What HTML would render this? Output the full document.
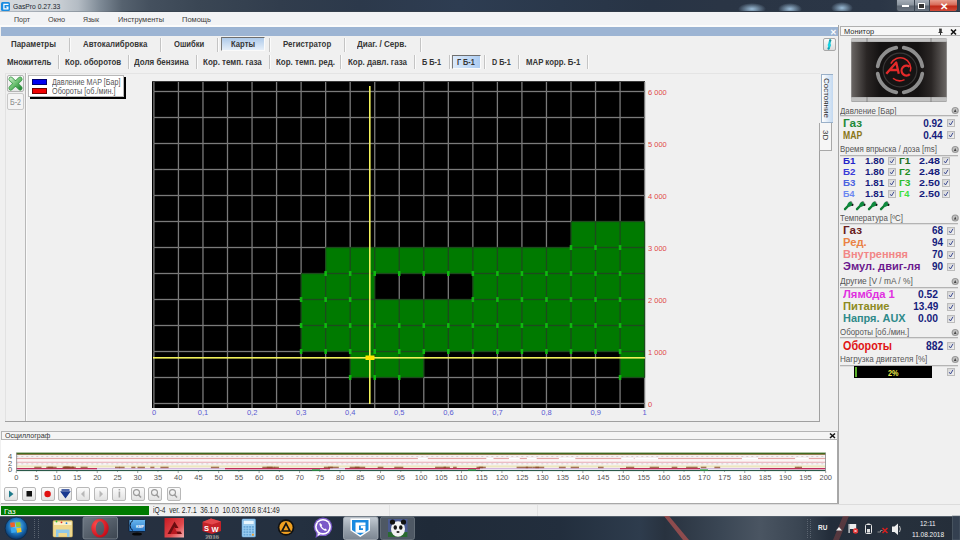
<!DOCTYPE html><html><head><meta charset="utf-8"><style>
html,body{margin:0;padding:0}
body{width:960px;height:540px;overflow:hidden;position:relative;background:#f0f0f0;font-family:"Liberation Sans",sans-serif}
.t{position:absolute;white-space:pre;font-family:"Liberation Sans",sans-serif}
svg{position:absolute;left:0;top:0}
</style></head><body>
<div style="position:absolute;left:0px;top:0px;width:960px;height:12px;background:linear-gradient(90deg,#d6dadf 0px,#cdd2d7 55px,#b4bcc4 78px,#7e8a96 100px,#56626f 122px,#44505e 150px,#3a4654 200px,#313d4d 280px,#2c394b 360px,#2e3d52 460px,#2a384b 560px,#283445 650px,#2a3545 720px,#2b3646 880px,#3a4552 960px)"></div>
<svg width="960" height="540"><defs><radialGradient id="blot"><stop offset="0" stop-color="#a8cce8" stop-opacity="0.9"/><stop offset="1" stop-color="#a8cce8" stop-opacity="0"/></radialGradient></defs><g fill="url(#blot)"><ellipse cx="752" cy="9" rx="14" ry="6"/><ellipse cx="790" cy="9" rx="12" ry="6"/><ellipse cx="842" cy="8" rx="11" ry="6"/></g></svg>
<div style="position:absolute;left:0px;top:11px;width:960px;height:1px;background:linear-gradient(90deg,#b8bec6,#8a949e 90px,#3a4552 130px,#2a3442 960px)"></div>
<svg width="960" height="540"><rect x="1" y="2" width="9" height="9" rx="1.5" fill="#1a8ce0"/><path d="M8.5 3.8 h-5.2 v5.6 h5.2 v-3 h-2.4 v1.2 h1 v0.6 h-2.6 v-3.2 h4Z" fill="#fff"/></svg>
<div class=t style="left:12.70px;top:2px;font-size:7.5px;line-height:9px;color:#20262e;font-weight:normal;transform:scaleX(0.898);transform-origin:0 0;">GasPro 0.27.33</div>
<div style="position:absolute;left:896px;top:0px;width:62px;height:12px;background:linear-gradient(#a4acb6,#8a949e 45%,#5c6672 55%,#6a7480);border:1px solid #343e4a;border-top:none;border-radius:0 0 3px 3px;box-sizing:border-box"></div>
<div style="position:absolute;left:914px;top:0px;width:1px;height:12px;background:#3a4450"></div>
<div style="position:absolute;left:929px;top:0px;width:1px;height:12px;background:#3a4450"></div>
<div style="position:absolute;left:930px;top:0px;width:27px;height:11px;background:linear-gradient(#e8a090,#d86a58 45%,#c02a18 55%,#d04a38);border-radius:0 0 3px 0"></div>
<div style="position:absolute;left:902px;top:5px;width:7px;height:2px;background:#fff"></div>
<div style="position:absolute;left:918px;top:3px;width:7px;height:6px;background:#333;border:1.5px solid #fff;box-sizing:border-box"></div>
<div class=t style="left:939.50px;top:1px;font-size:9.5px;line-height:11px;color:#fff;font-weight:bold;">✕</div>
<div style="position:absolute;left:0px;top:12px;width:960px;height:14px;background:#f2f3f5"></div>
<div class=t style="left:13.75px;top:15px;font-size:8px;line-height:9px;color:#3a3a3a;font-weight:normal;transform:scaleX(0.880);transform-origin:0 0;">Порт</div>
<div class=t style="left:48.00px;top:15px;font-size:8px;line-height:9px;color:#3a3a3a;font-weight:normal;transform:scaleX(0.914);transform-origin:0 0;">Окно</div>
<div class=t style="left:83.00px;top:15px;font-size:8px;line-height:9px;color:#3a3a3a;font-weight:normal;transform:scaleX(0.860);transform-origin:0 0;">Язык</div>
<div class=t style="left:117.50px;top:15px;font-size:8px;line-height:9px;color:#3a3a3a;font-weight:normal;transform:scaleX(0.923);transform-origin:0 0;">Инструменты</div>
<div class=t style="left:181.75px;top:15px;font-size:8px;line-height:9px;color:#3a3a3a;font-weight:normal;transform:scaleX(0.936);transform-origin:0 0;">Помощь</div>
<div style="position:absolute;left:0px;top:25px;width:839px;height:2px;background:#fbfbfb"></div>
<div style="position:absolute;left:1px;top:27px;width:837px;height:9px;background:#9cb4d3"></div>
<div class=t style="left:829.50px;top:28px;font-size:7.5px;line-height:9px;color:#ffffff;font-weight:bold;">✕</div>
<div style="position:absolute;left:0px;top:36px;width:838px;height:36px;background:#f0f0f0"></div>
<div style="position:absolute;left:221px;top:37px;width:44px;height:14px;background:linear-gradient(#aecaea,#e6eff9);border-top:1.5px solid #6e6e6e;border-left:1.2px solid #7a7a7a;border-right:1px solid #fafafa;border-bottom:1px solid #fafafa;box-sizing:border-box"></div>
<div style="position:absolute;left:69px;top:38px;width:1px;height:14px;background:#c4c4c4"></div>
<div style="position:absolute;left:70px;top:38px;width:1px;height:14px;background:#fbfbfb"></div>
<div style="position:absolute;left:160px;top:38px;width:1px;height:14px;background:#c4c4c4"></div>
<div style="position:absolute;left:161px;top:38px;width:1px;height:14px;background:#fbfbfb"></div>
<div style="position:absolute;left:217px;top:38px;width:1px;height:14px;background:#c4c4c4"></div>
<div style="position:absolute;left:218px;top:38px;width:1px;height:14px;background:#fbfbfb"></div>
<div style="position:absolute;left:269px;top:38px;width:1px;height:14px;background:#c4c4c4"></div>
<div style="position:absolute;left:270px;top:38px;width:1px;height:14px;background:#fbfbfb"></div>
<div style="position:absolute;left:344px;top:38px;width:1px;height:14px;background:#c4c4c4"></div>
<div style="position:absolute;left:345px;top:38px;width:1px;height:14px;background:#fbfbfb"></div>
<div style="position:absolute;left:420px;top:38px;width:1px;height:14px;background:#c4c4c4"></div>
<div style="position:absolute;left:421px;top:38px;width:1px;height:14px;background:#fbfbfb"></div>
<div class=t style="left:10.70px;top:39px;font-size:8.5px;line-height:10px;color:#363636;font-weight:bold;transform:scaleX(0.931);transform-origin:0 0;">Параметры</div>
<div class=t style="left:82.50px;top:39px;font-size:8.5px;line-height:10px;color:#363636;font-weight:bold;transform:scaleX(0.919);transform-origin:0 0;">Автокалибровка</div>
<div class=t style="left:174.25px;top:39px;font-size:8.5px;line-height:10px;color:#363636;font-weight:bold;transform:scaleX(0.898);transform-origin:0 0;">Ошибки</div>
<div class=t style="left:231.25px;top:39px;font-size:8.5px;line-height:10px;color:#363636;font-weight:bold;transform:scaleX(0.904);transform-origin:0 0;">Карты</div>
<div class=t style="left:282.50px;top:39px;font-size:8.5px;line-height:10px;color:#363636;font-weight:bold;transform:scaleX(0.923);transform-origin:0 0;">Регистратор</div>
<div class=t style="left:357.00px;top:39px;font-size:8.5px;line-height:10px;color:#363636;font-weight:bold;transform:scaleX(0.958);transform-origin:0 0;">Диаг. / Серв.</div>
<div style="position:absolute;left:452px;top:55px;width:29px;height:14px;background:linear-gradient(90deg,#dceafa,#acccf2);border-top:1.5px solid #6e6e6e;border-left:1.5px solid #7a7a7a;border-right:1px solid #fafafa;border-bottom:1px solid #fafafa;box-sizing:border-box"></div>
<div style="position:absolute;left:58px;top:55px;width:1px;height:14px;background:#c4c4c4"></div>
<div style="position:absolute;left:59px;top:55px;width:1px;height:14px;background:#fbfbfb"></div>
<div style="position:absolute;left:128px;top:55px;width:1px;height:14px;background:#c4c4c4"></div>
<div style="position:absolute;left:129px;top:55px;width:1px;height:14px;background:#fbfbfb"></div>
<div style="position:absolute;left:196px;top:55px;width:1px;height:14px;background:#c4c4c4"></div>
<div style="position:absolute;left:197px;top:55px;width:1px;height:14px;background:#fbfbfb"></div>
<div style="position:absolute;left:269px;top:55px;width:1px;height:14px;background:#c4c4c4"></div>
<div style="position:absolute;left:270px;top:55px;width:1px;height:14px;background:#fbfbfb"></div>
<div style="position:absolute;left:340px;top:55px;width:1px;height:14px;background:#c4c4c4"></div>
<div style="position:absolute;left:341px;top:55px;width:1px;height:14px;background:#fbfbfb"></div>
<div style="position:absolute;left:414px;top:55px;width:1px;height:14px;background:#c4c4c4"></div>
<div style="position:absolute;left:415px;top:55px;width:1px;height:14px;background:#fbfbfb"></div>
<div style="position:absolute;left:449px;top:55px;width:1px;height:14px;background:#c4c4c4"></div>
<div style="position:absolute;left:450px;top:55px;width:1px;height:14px;background:#fbfbfb"></div>
<div style="position:absolute;left:484px;top:55px;width:1px;height:14px;background:#c4c4c4"></div>
<div style="position:absolute;left:485px;top:55px;width:1px;height:14px;background:#fbfbfb"></div>
<div style="position:absolute;left:518px;top:55px;width:1px;height:14px;background:#c4c4c4"></div>
<div style="position:absolute;left:519px;top:55px;width:1px;height:14px;background:#fbfbfb"></div>
<div style="position:absolute;left:587px;top:55px;width:1px;height:14px;background:#c4c4c4"></div>
<div style="position:absolute;left:588px;top:55px;width:1px;height:14px;background:#fbfbfb"></div>
<div class=t style="left:7.10px;top:57px;font-size:8.5px;line-height:10px;color:#363636;font-weight:bold;transform:scaleX(0.924);transform-origin:0 0;">Множитель</div>
<div class=t style="left:65.00px;top:57px;font-size:8.5px;line-height:10px;color:#363636;font-weight:bold;transform:scaleX(0.928);transform-origin:0 0;">Кор. оборотов</div>
<div class=t style="left:134.25px;top:57px;font-size:8.5px;line-height:10px;color:#363636;font-weight:bold;transform:scaleX(0.939);transform-origin:0 0;">Доля бензина</div>
<div class=t style="left:202.70px;top:57px;font-size:8.5px;line-height:10px;color:#363636;font-weight:bold;transform:scaleX(0.941);transform-origin:0 0;">Кор. темп. газа</div>
<div class=t style="left:275.75px;top:57px;font-size:8.5px;line-height:10px;color:#363636;font-weight:bold;transform:scaleX(0.939);transform-origin:0 0;">Кор. темп. ред.</div>
<div class=t style="left:348.25px;top:57px;font-size:8.5px;line-height:10px;color:#363636;font-weight:bold;transform:scaleX(0.938);transform-origin:0 0;">Кор. давл. газа</div>
<div class=t style="left:422.00px;top:57px;font-size:8.5px;line-height:10px;color:#363636;font-weight:bold;transform:scaleX(0.859);transform-origin:0 0;">Б Б-1</div>
<div class=t style="left:457.00px;top:57px;font-size:8.5px;line-height:10px;color:#363636;font-weight:bold;transform:scaleX(0.852);transform-origin:0 0;">Г Б-1</div>
<div class=t style="left:491.75px;top:57px;font-size:8.5px;line-height:10px;color:#363636;font-weight:bold;transform:scaleX(0.847);transform-origin:0 0;">D Б-1</div>
<div class=t style="left:525.75px;top:57px;font-size:8.5px;line-height:10px;color:#363636;font-weight:bold;transform:scaleX(0.918);transform-origin:0 0;">MAP корр. Б-1</div>
<div style="position:absolute;left:823px;top:38px;width:13px;height:13px;background:linear-gradient(#fafafa,#dcdcdc);border:1px solid #a8a8a8;border-radius:2px;box-sizing:border-box"></div>
<svg width="960" height="540"><path d="M830.2 40.2 L829.4 43.5 L829.8 45.2 L828.6 48.6" stroke="#18c4d4" stroke-width="2.2" stroke-linecap="round" fill="none"/><circle cx="830.3" cy="40.6" r="1" fill="#2a8a8a"/><circle cx="829" cy="45" r="1.3" fill="#10d8e8"/><circle cx="828.6" cy="48.4" r="1" fill="#1a9aa8"/></svg>
<div style="position:absolute;left:5px;top:73px;width:815px;height:1px;background:#e4e4e4"></div>
<div style="position:absolute;left:5px;top:74px;width:1px;height:347px;background:#e2e2e2"></div>
<div style="position:absolute;left:25px;top:73px;width:1px;height:349px;background:#b8b8b8"></div>
<div style="position:absolute;left:26px;top:73px;width:1px;height:348px;background:#fafafa"></div>
<div style="position:absolute;left:5px;top:421px;width:815px;height:1px;background:#a0a0a0"></div>
<div style="position:absolute;left:819px;top:150px;width:1px;height:272px;background:#a0a0a0"></div>
<div style="position:absolute;left:7px;top:75px;width:17px;height:17px;background:linear-gradient(#fdfdfd,#e6e6e6);border:1px solid #b4b4b4;border-radius:2px;box-sizing:border-box"></div>
<svg width="960" height="540"><defs><linearGradient id="xg" x1="0" y1="0" x2="1" y2="1"><stop offset="0" stop-color="#b8e4b8"/><stop offset="0.5" stop-color="#6cc070"/><stop offset="1" stop-color="#2a8a3a"/></linearGradient></defs><g stroke-linecap="round"><path d="M10.8 79 L20.2 88.2 M20.2 79 L10.8 88.2" stroke="#3a9a48" stroke-width="4.6"/><path d="M10.8 79 L20.2 88.2 M20.2 79 L10.8 88.2" stroke="url(#xg)" stroke-width="3.2"/></g></svg>
<div style="position:absolute;left:7px;top:93px;width:17px;height:17px;background:#f4f4f4;border:1px solid #c8c8c8;border-radius:2px;box-sizing:border-box"></div>
<div class=t style="left:10.20px;top:97px;font-size:8.5px;line-height:10px;color:#8a8a8a;font-weight:normal;transform:scaleX(0.835);transform-origin:0 0;">Б-2</div>
<div style="position:absolute;left:30px;top:77px;width:96px;height:22px;background:#000"></div>
<div style="position:absolute;left:28px;top:75px;width:96px;height:22px;background:#fff;border:1px solid #b8b8b8;box-sizing:border-box"></div>
<div style="position:absolute;left:32px;top:79px;width:15px;height:6px;background:#0000f0;border:0.6px solid #000070;box-sizing:border-box"></div>
<div style="position:absolute;left:32px;top:88px;width:15px;height:6px;background:#f00000;border:0.6px solid #700000;box-sizing:border-box"></div>
<div class=t style="left:51.50px;top:77px;font-size:8.5px;line-height:10px;color:#555555;font-weight:normal;transform:scaleX(0.841);transform-origin:0 0;">Давление MAP [Бар]</div>
<div class=t style="left:51.90px;top:86px;font-size:8.5px;line-height:10px;color:#555555;font-weight:normal;transform:scaleX(0.852);transform-origin:0 0;">Обороты [об./мин.]</div>
<svg width="960" height="540"><rect x="152" y="81" width="493" height="327" fill="#000"/><rect x="152" y="81" width="493" height="1" fill="#3a3a3a"/><rect x="350.18" y="351.50" width="24.84" height="26.30" fill="#007a00"/><rect x="374.72" y="351.50" width="24.83" height="26.30" fill="#007a00"/><rect x="399.25" y="351.50" width="24.83" height="26.30" fill="#007a00"/><rect x="620.07" y="351.50" width="24.83" height="26.30" fill="#007a00"/><rect x="301.11" y="325.50" width="24.83" height="26.30" fill="#007a00"/><rect x="325.64" y="325.50" width="24.84" height="26.30" fill="#007a00"/><rect x="350.18" y="325.50" width="24.84" height="26.30" fill="#007a00"/><rect x="374.72" y="325.50" width="24.83" height="26.30" fill="#007a00"/><rect x="399.25" y="325.50" width="24.83" height="26.30" fill="#007a00"/><rect x="423.78" y="325.50" width="24.84" height="26.30" fill="#007a00"/><rect x="448.32" y="325.50" width="24.83" height="26.30" fill="#007a00"/><rect x="472.86" y="325.50" width="24.83" height="26.30" fill="#007a00"/><rect x="497.39" y="325.50" width="24.83" height="26.30" fill="#007a00"/><rect x="521.92" y="325.50" width="24.84" height="26.30" fill="#007a00"/><rect x="546.46" y="325.50" width="24.83" height="26.30" fill="#007a00"/><rect x="571.00" y="325.50" width="24.83" height="26.30" fill="#007a00"/><rect x="595.53" y="325.50" width="24.84" height="26.30" fill="#007a00"/><rect x="620.07" y="325.50" width="24.83" height="26.30" fill="#007a00"/><rect x="301.11" y="299.50" width="24.83" height="26.30" fill="#007a00"/><rect x="325.64" y="299.50" width="24.84" height="26.30" fill="#007a00"/><rect x="350.18" y="299.50" width="24.84" height="26.30" fill="#007a00"/><rect x="374.72" y="299.50" width="24.83" height="26.30" fill="#007a00"/><rect x="399.25" y="299.50" width="24.83" height="26.30" fill="#007a00"/><rect x="423.78" y="299.50" width="24.84" height="26.30" fill="#007a00"/><rect x="448.32" y="299.50" width="24.83" height="26.30" fill="#007a00"/><rect x="472.86" y="299.50" width="24.83" height="26.30" fill="#007a00"/><rect x="497.39" y="299.50" width="24.83" height="26.30" fill="#007a00"/><rect x="521.92" y="299.50" width="24.84" height="26.30" fill="#007a00"/><rect x="546.46" y="299.50" width="24.83" height="26.30" fill="#007a00"/><rect x="571.00" y="299.50" width="24.83" height="26.30" fill="#007a00"/><rect x="595.53" y="299.50" width="24.84" height="26.30" fill="#007a00"/><rect x="620.07" y="299.50" width="24.83" height="26.30" fill="#007a00"/><rect x="301.11" y="273.50" width="24.83" height="26.30" fill="#007a00"/><rect x="325.64" y="273.50" width="24.84" height="26.30" fill="#007a00"/><rect x="350.18" y="273.50" width="24.84" height="26.30" fill="#007a00"/><rect x="472.86" y="273.50" width="24.83" height="26.30" fill="#007a00"/><rect x="497.39" y="273.50" width="24.83" height="26.30" fill="#007a00"/><rect x="521.92" y="273.50" width="24.84" height="26.30" fill="#007a00"/><rect x="546.46" y="273.50" width="24.83" height="26.30" fill="#007a00"/><rect x="571.00" y="273.50" width="24.83" height="26.30" fill="#007a00"/><rect x="595.53" y="273.50" width="24.84" height="26.30" fill="#007a00"/><rect x="620.07" y="273.50" width="24.83" height="26.30" fill="#007a00"/><rect x="325.64" y="247.50" width="24.84" height="26.30" fill="#007a00"/><rect x="350.18" y="247.50" width="24.84" height="26.30" fill="#007a00"/><rect x="374.72" y="247.50" width="24.83" height="26.30" fill="#007a00"/><rect x="399.25" y="247.50" width="24.83" height="26.30" fill="#007a00"/><rect x="423.78" y="247.50" width="24.84" height="26.30" fill="#007a00"/><rect x="448.32" y="247.50" width="24.83" height="26.30" fill="#007a00"/><rect x="472.86" y="247.50" width="24.83" height="26.30" fill="#007a00"/><rect x="497.39" y="247.50" width="24.83" height="26.30" fill="#007a00"/><rect x="521.92" y="247.50" width="24.84" height="26.30" fill="#007a00"/><rect x="546.46" y="247.50" width="24.83" height="26.30" fill="#007a00"/><rect x="571.00" y="247.50" width="24.83" height="26.30" fill="#007a00"/><rect x="595.53" y="247.50" width="24.84" height="26.30" fill="#007a00"/><rect x="620.07" y="247.50" width="24.83" height="26.30" fill="#007a00"/><rect x="571.00" y="221.50" width="24.83" height="26.30" fill="#007a00"/><rect x="595.53" y="221.50" width="24.84" height="26.30" fill="#007a00"/><rect x="620.07" y="221.50" width="24.83" height="26.30" fill="#007a00"/><line x1="153.9" y1="377.50" x2="153.9" y2="403.50" stroke="#7a7a7a" stroke-width="1.3"/><line x1="153.9" y1="351.50" x2="153.9" y2="377.50" stroke="#7a7a7a" stroke-width="1.3"/><line x1="153.9" y1="325.50" x2="153.9" y2="351.50" stroke="#7a7a7a" stroke-width="1.3"/><line x1="153.9" y1="299.50" x2="153.9" y2="325.50" stroke="#7a7a7a" stroke-width="1.3"/><line x1="153.9" y1="273.50" x2="153.9" y2="299.50" stroke="#7a7a7a" stroke-width="1.3"/><line x1="153.9" y1="247.50" x2="153.9" y2="273.50" stroke="#7a7a7a" stroke-width="1.3"/><line x1="153.9" y1="221.50" x2="153.9" y2="247.50" stroke="#7a7a7a" stroke-width="1.3"/><line x1="153.9" y1="195.50" x2="153.9" y2="221.50" stroke="#7a7a7a" stroke-width="1.3"/><line x1="153.9" y1="169.50" x2="153.9" y2="195.50" stroke="#7a7a7a" stroke-width="1.3"/><line x1="153.9" y1="143.50" x2="153.9" y2="169.50" stroke="#7a7a7a" stroke-width="1.3"/><line x1="153.9" y1="117.50" x2="153.9" y2="143.50" stroke="#7a7a7a" stroke-width="1.3"/><line x1="153.9" y1="91.50" x2="153.9" y2="117.50" stroke="#7a7a7a" stroke-width="1.3"/><line x1="153.9" y1="82" x2="153.9" y2="91.50" stroke="#7a7a7a" stroke-width="1.3"/><line x1="153.9" y1="403.50" x2="153.9" y2="408" stroke="#7a7a7a" stroke-width="1.3"/><line x1="178.44" y1="377.50" x2="178.44" y2="403.50" stroke="#7a7a7a" stroke-width="1.3"/><line x1="178.44" y1="351.50" x2="178.44" y2="377.50" stroke="#7a7a7a" stroke-width="1.3"/><line x1="178.44" y1="325.50" x2="178.44" y2="351.50" stroke="#7a7a7a" stroke-width="1.3"/><line x1="178.44" y1="299.50" x2="178.44" y2="325.50" stroke="#7a7a7a" stroke-width="1.3"/><line x1="178.44" y1="273.50" x2="178.44" y2="299.50" stroke="#7a7a7a" stroke-width="1.3"/><line x1="178.44" y1="247.50" x2="178.44" y2="273.50" stroke="#7a7a7a" stroke-width="1.3"/><line x1="178.44" y1="221.50" x2="178.44" y2="247.50" stroke="#7a7a7a" stroke-width="1.3"/><line x1="178.44" y1="195.50" x2="178.44" y2="221.50" stroke="#7a7a7a" stroke-width="1.3"/><line x1="178.44" y1="169.50" x2="178.44" y2="195.50" stroke="#7a7a7a" stroke-width="1.3"/><line x1="178.44" y1="143.50" x2="178.44" y2="169.50" stroke="#7a7a7a" stroke-width="1.3"/><line x1="178.44" y1="117.50" x2="178.44" y2="143.50" stroke="#7a7a7a" stroke-width="1.3"/><line x1="178.44" y1="91.50" x2="178.44" y2="117.50" stroke="#7a7a7a" stroke-width="1.3"/><line x1="178.44" y1="82" x2="178.44" y2="91.50" stroke="#7a7a7a" stroke-width="1.3"/><line x1="178.44" y1="403.50" x2="178.44" y2="408" stroke="#7a7a7a" stroke-width="1.3"/><line x1="202.97" y1="377.50" x2="202.97" y2="403.50" stroke="#7a7a7a" stroke-width="1.3"/><line x1="202.97" y1="351.50" x2="202.97" y2="377.50" stroke="#7a7a7a" stroke-width="1.3"/><line x1="202.97" y1="325.50" x2="202.97" y2="351.50" stroke="#7a7a7a" stroke-width="1.3"/><line x1="202.97" y1="299.50" x2="202.97" y2="325.50" stroke="#7a7a7a" stroke-width="1.3"/><line x1="202.97" y1="273.50" x2="202.97" y2="299.50" stroke="#7a7a7a" stroke-width="1.3"/><line x1="202.97" y1="247.50" x2="202.97" y2="273.50" stroke="#7a7a7a" stroke-width="1.3"/><line x1="202.97" y1="221.50" x2="202.97" y2="247.50" stroke="#7a7a7a" stroke-width="1.3"/><line x1="202.97" y1="195.50" x2="202.97" y2="221.50" stroke="#7a7a7a" stroke-width="1.3"/><line x1="202.97" y1="169.50" x2="202.97" y2="195.50" stroke="#7a7a7a" stroke-width="1.3"/><line x1="202.97" y1="143.50" x2="202.97" y2="169.50" stroke="#7a7a7a" stroke-width="1.3"/><line x1="202.97" y1="117.50" x2="202.97" y2="143.50" stroke="#7a7a7a" stroke-width="1.3"/><line x1="202.97" y1="91.50" x2="202.97" y2="117.50" stroke="#7a7a7a" stroke-width="1.3"/><line x1="202.97" y1="82" x2="202.97" y2="91.50" stroke="#7a7a7a" stroke-width="1.3"/><line x1="202.97" y1="403.50" x2="202.97" y2="408" stroke="#7a7a7a" stroke-width="1.3"/><line x1="227.5" y1="377.50" x2="227.5" y2="403.50" stroke="#7a7a7a" stroke-width="1.3"/><line x1="227.5" y1="351.50" x2="227.5" y2="377.50" stroke="#7a7a7a" stroke-width="1.3"/><line x1="227.5" y1="325.50" x2="227.5" y2="351.50" stroke="#7a7a7a" stroke-width="1.3"/><line x1="227.5" y1="299.50" x2="227.5" y2="325.50" stroke="#7a7a7a" stroke-width="1.3"/><line x1="227.5" y1="273.50" x2="227.5" y2="299.50" stroke="#7a7a7a" stroke-width="1.3"/><line x1="227.5" y1="247.50" x2="227.5" y2="273.50" stroke="#7a7a7a" stroke-width="1.3"/><line x1="227.5" y1="221.50" x2="227.5" y2="247.50" stroke="#7a7a7a" stroke-width="1.3"/><line x1="227.5" y1="195.50" x2="227.5" y2="221.50" stroke="#7a7a7a" stroke-width="1.3"/><line x1="227.5" y1="169.50" x2="227.5" y2="195.50" stroke="#7a7a7a" stroke-width="1.3"/><line x1="227.5" y1="143.50" x2="227.5" y2="169.50" stroke="#7a7a7a" stroke-width="1.3"/><line x1="227.5" y1="117.50" x2="227.5" y2="143.50" stroke="#7a7a7a" stroke-width="1.3"/><line x1="227.5" y1="91.50" x2="227.5" y2="117.50" stroke="#7a7a7a" stroke-width="1.3"/><line x1="227.5" y1="82" x2="227.5" y2="91.50" stroke="#7a7a7a" stroke-width="1.3"/><line x1="227.5" y1="403.50" x2="227.5" y2="408" stroke="#7a7a7a" stroke-width="1.3"/><line x1="252.04" y1="377.50" x2="252.04" y2="403.50" stroke="#7a7a7a" stroke-width="1.3"/><line x1="252.04" y1="351.50" x2="252.04" y2="377.50" stroke="#7a7a7a" stroke-width="1.3"/><line x1="252.04" y1="325.50" x2="252.04" y2="351.50" stroke="#7a7a7a" stroke-width="1.3"/><line x1="252.04" y1="299.50" x2="252.04" y2="325.50" stroke="#7a7a7a" stroke-width="1.3"/><line x1="252.04" y1="273.50" x2="252.04" y2="299.50" stroke="#7a7a7a" stroke-width="1.3"/><line x1="252.04" y1="247.50" x2="252.04" y2="273.50" stroke="#7a7a7a" stroke-width="1.3"/><line x1="252.04" y1="221.50" x2="252.04" y2="247.50" stroke="#7a7a7a" stroke-width="1.3"/><line x1="252.04" y1="195.50" x2="252.04" y2="221.50" stroke="#7a7a7a" stroke-width="1.3"/><line x1="252.04" y1="169.50" x2="252.04" y2="195.50" stroke="#7a7a7a" stroke-width="1.3"/><line x1="252.04" y1="143.50" x2="252.04" y2="169.50" stroke="#7a7a7a" stroke-width="1.3"/><line x1="252.04" y1="117.50" x2="252.04" y2="143.50" stroke="#7a7a7a" stroke-width="1.3"/><line x1="252.04" y1="91.50" x2="252.04" y2="117.50" stroke="#7a7a7a" stroke-width="1.3"/><line x1="252.04" y1="82" x2="252.04" y2="91.50" stroke="#7a7a7a" stroke-width="1.3"/><line x1="252.04" y1="403.50" x2="252.04" y2="408" stroke="#7a7a7a" stroke-width="1.3"/><line x1="276.57" y1="377.50" x2="276.57" y2="403.50" stroke="#7a7a7a" stroke-width="1.3"/><line x1="276.57" y1="351.50" x2="276.57" y2="377.50" stroke="#7a7a7a" stroke-width="1.3"/><line x1="276.57" y1="325.50" x2="276.57" y2="351.50" stroke="#7a7a7a" stroke-width="1.3"/><line x1="276.57" y1="299.50" x2="276.57" y2="325.50" stroke="#7a7a7a" stroke-width="1.3"/><line x1="276.57" y1="273.50" x2="276.57" y2="299.50" stroke="#7a7a7a" stroke-width="1.3"/><line x1="276.57" y1="247.50" x2="276.57" y2="273.50" stroke="#7a7a7a" stroke-width="1.3"/><line x1="276.57" y1="221.50" x2="276.57" y2="247.50" stroke="#7a7a7a" stroke-width="1.3"/><line x1="276.57" y1="195.50" x2="276.57" y2="221.50" stroke="#7a7a7a" stroke-width="1.3"/><line x1="276.57" y1="169.50" x2="276.57" y2="195.50" stroke="#7a7a7a" stroke-width="1.3"/><line x1="276.57" y1="143.50" x2="276.57" y2="169.50" stroke="#7a7a7a" stroke-width="1.3"/><line x1="276.57" y1="117.50" x2="276.57" y2="143.50" stroke="#7a7a7a" stroke-width="1.3"/><line x1="276.57" y1="91.50" x2="276.57" y2="117.50" stroke="#7a7a7a" stroke-width="1.3"/><line x1="276.57" y1="82" x2="276.57" y2="91.50" stroke="#7a7a7a" stroke-width="1.3"/><line x1="276.57" y1="403.50" x2="276.57" y2="408" stroke="#7a7a7a" stroke-width="1.3"/><line x1="301.11" y1="377.50" x2="301.11" y2="403.50" stroke="#7a7a7a" stroke-width="1.3"/><line x1="301.11" y1="351.50" x2="301.11" y2="377.50" stroke="#7a7a7a" stroke-width="1.3"/><line x1="301.11" y1="325.50" x2="301.11" y2="351.50" stroke="#1d4a1d" stroke-width="1.3"/><line x1="301.11" y1="299.50" x2="301.11" y2="325.50" stroke="#1d4a1d" stroke-width="1.3"/><line x1="301.11" y1="273.50" x2="301.11" y2="299.50" stroke="#1d4a1d" stroke-width="1.3"/><line x1="301.11" y1="247.50" x2="301.11" y2="273.50" stroke="#7a7a7a" stroke-width="1.3"/><line x1="301.11" y1="221.50" x2="301.11" y2="247.50" stroke="#7a7a7a" stroke-width="1.3"/><line x1="301.11" y1="195.50" x2="301.11" y2="221.50" stroke="#7a7a7a" stroke-width="1.3"/><line x1="301.11" y1="169.50" x2="301.11" y2="195.50" stroke="#7a7a7a" stroke-width="1.3"/><line x1="301.11" y1="143.50" x2="301.11" y2="169.50" stroke="#7a7a7a" stroke-width="1.3"/><line x1="301.11" y1="117.50" x2="301.11" y2="143.50" stroke="#7a7a7a" stroke-width="1.3"/><line x1="301.11" y1="91.50" x2="301.11" y2="117.50" stroke="#7a7a7a" stroke-width="1.3"/><line x1="301.11" y1="82" x2="301.11" y2="91.50" stroke="#7a7a7a" stroke-width="1.3"/><line x1="301.11" y1="403.50" x2="301.11" y2="408" stroke="#7a7a7a" stroke-width="1.3"/><line x1="325.64" y1="377.50" x2="325.64" y2="403.50" stroke="#7a7a7a" stroke-width="1.3"/><line x1="325.64" y1="351.50" x2="325.64" y2="377.50" stroke="#7a7a7a" stroke-width="1.3"/><line x1="325.64" y1="325.50" x2="325.64" y2="351.50" stroke="#1d4a1d" stroke-width="1.3"/><line x1="325.64" y1="299.50" x2="325.64" y2="325.50" stroke="#1d4a1d" stroke-width="1.3"/><line x1="325.64" y1="273.50" x2="325.64" y2="299.50" stroke="#1d4a1d" stroke-width="1.3"/><line x1="325.64" y1="247.50" x2="325.64" y2="273.50" stroke="#1d4a1d" stroke-width="1.3"/><line x1="325.64" y1="221.50" x2="325.64" y2="247.50" stroke="#7a7a7a" stroke-width="1.3"/><line x1="325.64" y1="195.50" x2="325.64" y2="221.50" stroke="#7a7a7a" stroke-width="1.3"/><line x1="325.64" y1="169.50" x2="325.64" y2="195.50" stroke="#7a7a7a" stroke-width="1.3"/><line x1="325.64" y1="143.50" x2="325.64" y2="169.50" stroke="#7a7a7a" stroke-width="1.3"/><line x1="325.64" y1="117.50" x2="325.64" y2="143.50" stroke="#7a7a7a" stroke-width="1.3"/><line x1="325.64" y1="91.50" x2="325.64" y2="117.50" stroke="#7a7a7a" stroke-width="1.3"/><line x1="325.64" y1="82" x2="325.64" y2="91.50" stroke="#7a7a7a" stroke-width="1.3"/><line x1="325.64" y1="403.50" x2="325.64" y2="408" stroke="#7a7a7a" stroke-width="1.3"/><line x1="350.18" y1="377.50" x2="350.18" y2="403.50" stroke="#7a7a7a" stroke-width="1.3"/><line x1="350.18" y1="351.50" x2="350.18" y2="377.50" stroke="#1d4a1d" stroke-width="1.3"/><line x1="350.18" y1="325.50" x2="350.18" y2="351.50" stroke="#1d4a1d" stroke-width="1.3"/><line x1="350.18" y1="299.50" x2="350.18" y2="325.50" stroke="#1d4a1d" stroke-width="1.3"/><line x1="350.18" y1="273.50" x2="350.18" y2="299.50" stroke="#1d4a1d" stroke-width="1.3"/><line x1="350.18" y1="247.50" x2="350.18" y2="273.50" stroke="#1d4a1d" stroke-width="1.3"/><line x1="350.18" y1="221.50" x2="350.18" y2="247.50" stroke="#7a7a7a" stroke-width="1.3"/><line x1="350.18" y1="195.50" x2="350.18" y2="221.50" stroke="#7a7a7a" stroke-width="1.3"/><line x1="350.18" y1="169.50" x2="350.18" y2="195.50" stroke="#7a7a7a" stroke-width="1.3"/><line x1="350.18" y1="143.50" x2="350.18" y2="169.50" stroke="#7a7a7a" stroke-width="1.3"/><line x1="350.18" y1="117.50" x2="350.18" y2="143.50" stroke="#7a7a7a" stroke-width="1.3"/><line x1="350.18" y1="91.50" x2="350.18" y2="117.50" stroke="#7a7a7a" stroke-width="1.3"/><line x1="350.18" y1="82" x2="350.18" y2="91.50" stroke="#7a7a7a" stroke-width="1.3"/><line x1="350.18" y1="403.50" x2="350.18" y2="408" stroke="#7a7a7a" stroke-width="1.3"/><line x1="374.72" y1="377.50" x2="374.72" y2="403.50" stroke="#7a7a7a" stroke-width="1.3"/><line x1="374.72" y1="351.50" x2="374.72" y2="377.50" stroke="#1d4a1d" stroke-width="1.3"/><line x1="374.72" y1="325.50" x2="374.72" y2="351.50" stroke="#1d4a1d" stroke-width="1.3"/><line x1="374.72" y1="299.50" x2="374.72" y2="325.50" stroke="#1d4a1d" stroke-width="1.3"/><line x1="374.72" y1="273.50" x2="374.72" y2="299.50" stroke="#1d4a1d" stroke-width="1.3"/><line x1="374.72" y1="247.50" x2="374.72" y2="273.50" stroke="#1d4a1d" stroke-width="1.3"/><line x1="374.72" y1="221.50" x2="374.72" y2="247.50" stroke="#7a7a7a" stroke-width="1.3"/><line x1="374.72" y1="195.50" x2="374.72" y2="221.50" stroke="#7a7a7a" stroke-width="1.3"/><line x1="374.72" y1="169.50" x2="374.72" y2="195.50" stroke="#7a7a7a" stroke-width="1.3"/><line x1="374.72" y1="143.50" x2="374.72" y2="169.50" stroke="#7a7a7a" stroke-width="1.3"/><line x1="374.72" y1="117.50" x2="374.72" y2="143.50" stroke="#7a7a7a" stroke-width="1.3"/><line x1="374.72" y1="91.50" x2="374.72" y2="117.50" stroke="#7a7a7a" stroke-width="1.3"/><line x1="374.72" y1="82" x2="374.72" y2="91.50" stroke="#7a7a7a" stroke-width="1.3"/><line x1="374.72" y1="403.50" x2="374.72" y2="408" stroke="#7a7a7a" stroke-width="1.3"/><line x1="399.25" y1="377.50" x2="399.25" y2="403.50" stroke="#7a7a7a" stroke-width="1.3"/><line x1="399.25" y1="351.50" x2="399.25" y2="377.50" stroke="#1d4a1d" stroke-width="1.3"/><line x1="399.25" y1="325.50" x2="399.25" y2="351.50" stroke="#1d4a1d" stroke-width="1.3"/><line x1="399.25" y1="299.50" x2="399.25" y2="325.50" stroke="#1d4a1d" stroke-width="1.3"/><line x1="399.25" y1="273.50" x2="399.25" y2="299.50" stroke="#7a7a7a" stroke-width="1.3"/><line x1="399.25" y1="247.50" x2="399.25" y2="273.50" stroke="#1d4a1d" stroke-width="1.3"/><line x1="399.25" y1="221.50" x2="399.25" y2="247.50" stroke="#7a7a7a" stroke-width="1.3"/><line x1="399.25" y1="195.50" x2="399.25" y2="221.50" stroke="#7a7a7a" stroke-width="1.3"/><line x1="399.25" y1="169.50" x2="399.25" y2="195.50" stroke="#7a7a7a" stroke-width="1.3"/><line x1="399.25" y1="143.50" x2="399.25" y2="169.50" stroke="#7a7a7a" stroke-width="1.3"/><line x1="399.25" y1="117.50" x2="399.25" y2="143.50" stroke="#7a7a7a" stroke-width="1.3"/><line x1="399.25" y1="91.50" x2="399.25" y2="117.50" stroke="#7a7a7a" stroke-width="1.3"/><line x1="399.25" y1="82" x2="399.25" y2="91.50" stroke="#7a7a7a" stroke-width="1.3"/><line x1="399.25" y1="403.50" x2="399.25" y2="408" stroke="#7a7a7a" stroke-width="1.3"/><line x1="423.78" y1="377.50" x2="423.78" y2="403.50" stroke="#7a7a7a" stroke-width="1.3"/><line x1="423.78" y1="351.50" x2="423.78" y2="377.50" stroke="#1d4a1d" stroke-width="1.3"/><line x1="423.78" y1="325.50" x2="423.78" y2="351.50" stroke="#1d4a1d" stroke-width="1.3"/><line x1="423.78" y1="299.50" x2="423.78" y2="325.50" stroke="#1d4a1d" stroke-width="1.3"/><line x1="423.78" y1="273.50" x2="423.78" y2="299.50" stroke="#7a7a7a" stroke-width="1.3"/><line x1="423.78" y1="247.50" x2="423.78" y2="273.50" stroke="#1d4a1d" stroke-width="1.3"/><line x1="423.78" y1="221.50" x2="423.78" y2="247.50" stroke="#7a7a7a" stroke-width="1.3"/><line x1="423.78" y1="195.50" x2="423.78" y2="221.50" stroke="#7a7a7a" stroke-width="1.3"/><line x1="423.78" y1="169.50" x2="423.78" y2="195.50" stroke="#7a7a7a" stroke-width="1.3"/><line x1="423.78" y1="143.50" x2="423.78" y2="169.50" stroke="#7a7a7a" stroke-width="1.3"/><line x1="423.78" y1="117.50" x2="423.78" y2="143.50" stroke="#7a7a7a" stroke-width="1.3"/><line x1="423.78" y1="91.50" x2="423.78" y2="117.50" stroke="#7a7a7a" stroke-width="1.3"/><line x1="423.78" y1="82" x2="423.78" y2="91.50" stroke="#7a7a7a" stroke-width="1.3"/><line x1="423.78" y1="403.50" x2="423.78" y2="408" stroke="#7a7a7a" stroke-width="1.3"/><line x1="448.32" y1="377.50" x2="448.32" y2="403.50" stroke="#7a7a7a" stroke-width="1.3"/><line x1="448.32" y1="351.50" x2="448.32" y2="377.50" stroke="#7a7a7a" stroke-width="1.3"/><line x1="448.32" y1="325.50" x2="448.32" y2="351.50" stroke="#1d4a1d" stroke-width="1.3"/><line x1="448.32" y1="299.50" x2="448.32" y2="325.50" stroke="#1d4a1d" stroke-width="1.3"/><line x1="448.32" y1="273.50" x2="448.32" y2="299.50" stroke="#7a7a7a" stroke-width="1.3"/><line x1="448.32" y1="247.50" x2="448.32" y2="273.50" stroke="#1d4a1d" stroke-width="1.3"/><line x1="448.32" y1="221.50" x2="448.32" y2="247.50" stroke="#7a7a7a" stroke-width="1.3"/><line x1="448.32" y1="195.50" x2="448.32" y2="221.50" stroke="#7a7a7a" stroke-width="1.3"/><line x1="448.32" y1="169.50" x2="448.32" y2="195.50" stroke="#7a7a7a" stroke-width="1.3"/><line x1="448.32" y1="143.50" x2="448.32" y2="169.50" stroke="#7a7a7a" stroke-width="1.3"/><line x1="448.32" y1="117.50" x2="448.32" y2="143.50" stroke="#7a7a7a" stroke-width="1.3"/><line x1="448.32" y1="91.50" x2="448.32" y2="117.50" stroke="#7a7a7a" stroke-width="1.3"/><line x1="448.32" y1="82" x2="448.32" y2="91.50" stroke="#7a7a7a" stroke-width="1.3"/><line x1="448.32" y1="403.50" x2="448.32" y2="408" stroke="#7a7a7a" stroke-width="1.3"/><line x1="472.86" y1="377.50" x2="472.86" y2="403.50" stroke="#7a7a7a" stroke-width="1.3"/><line x1="472.86" y1="351.50" x2="472.86" y2="377.50" stroke="#7a7a7a" stroke-width="1.3"/><line x1="472.86" y1="325.50" x2="472.86" y2="351.50" stroke="#1d4a1d" stroke-width="1.3"/><line x1="472.86" y1="299.50" x2="472.86" y2="325.50" stroke="#1d4a1d" stroke-width="1.3"/><line x1="472.86" y1="273.50" x2="472.86" y2="299.50" stroke="#1d4a1d" stroke-width="1.3"/><line x1="472.86" y1="247.50" x2="472.86" y2="273.50" stroke="#1d4a1d" stroke-width="1.3"/><line x1="472.86" y1="221.50" x2="472.86" y2="247.50" stroke="#7a7a7a" stroke-width="1.3"/><line x1="472.86" y1="195.50" x2="472.86" y2="221.50" stroke="#7a7a7a" stroke-width="1.3"/><line x1="472.86" y1="169.50" x2="472.86" y2="195.50" stroke="#7a7a7a" stroke-width="1.3"/><line x1="472.86" y1="143.50" x2="472.86" y2="169.50" stroke="#7a7a7a" stroke-width="1.3"/><line x1="472.86" y1="117.50" x2="472.86" y2="143.50" stroke="#7a7a7a" stroke-width="1.3"/><line x1="472.86" y1="91.50" x2="472.86" y2="117.50" stroke="#7a7a7a" stroke-width="1.3"/><line x1="472.86" y1="82" x2="472.86" y2="91.50" stroke="#7a7a7a" stroke-width="1.3"/><line x1="472.86" y1="403.50" x2="472.86" y2="408" stroke="#7a7a7a" stroke-width="1.3"/><line x1="497.39" y1="377.50" x2="497.39" y2="403.50" stroke="#7a7a7a" stroke-width="1.3"/><line x1="497.39" y1="351.50" x2="497.39" y2="377.50" stroke="#7a7a7a" stroke-width="1.3"/><line x1="497.39" y1="325.50" x2="497.39" y2="351.50" stroke="#1d4a1d" stroke-width="1.3"/><line x1="497.39" y1="299.50" x2="497.39" y2="325.50" stroke="#1d4a1d" stroke-width="1.3"/><line x1="497.39" y1="273.50" x2="497.39" y2="299.50" stroke="#1d4a1d" stroke-width="1.3"/><line x1="497.39" y1="247.50" x2="497.39" y2="273.50" stroke="#1d4a1d" stroke-width="1.3"/><line x1="497.39" y1="221.50" x2="497.39" y2="247.50" stroke="#7a7a7a" stroke-width="1.3"/><line x1="497.39" y1="195.50" x2="497.39" y2="221.50" stroke="#7a7a7a" stroke-width="1.3"/><line x1="497.39" y1="169.50" x2="497.39" y2="195.50" stroke="#7a7a7a" stroke-width="1.3"/><line x1="497.39" y1="143.50" x2="497.39" y2="169.50" stroke="#7a7a7a" stroke-width="1.3"/><line x1="497.39" y1="117.50" x2="497.39" y2="143.50" stroke="#7a7a7a" stroke-width="1.3"/><line x1="497.39" y1="91.50" x2="497.39" y2="117.50" stroke="#7a7a7a" stroke-width="1.3"/><line x1="497.39" y1="82" x2="497.39" y2="91.50" stroke="#7a7a7a" stroke-width="1.3"/><line x1="497.39" y1="403.50" x2="497.39" y2="408" stroke="#7a7a7a" stroke-width="1.3"/><line x1="521.92" y1="377.50" x2="521.92" y2="403.50" stroke="#7a7a7a" stroke-width="1.3"/><line x1="521.92" y1="351.50" x2="521.92" y2="377.50" stroke="#7a7a7a" stroke-width="1.3"/><line x1="521.92" y1="325.50" x2="521.92" y2="351.50" stroke="#1d4a1d" stroke-width="1.3"/><line x1="521.92" y1="299.50" x2="521.92" y2="325.50" stroke="#1d4a1d" stroke-width="1.3"/><line x1="521.92" y1="273.50" x2="521.92" y2="299.50" stroke="#1d4a1d" stroke-width="1.3"/><line x1="521.92" y1="247.50" x2="521.92" y2="273.50" stroke="#1d4a1d" stroke-width="1.3"/><line x1="521.92" y1="221.50" x2="521.92" y2="247.50" stroke="#7a7a7a" stroke-width="1.3"/><line x1="521.92" y1="195.50" x2="521.92" y2="221.50" stroke="#7a7a7a" stroke-width="1.3"/><line x1="521.92" y1="169.50" x2="521.92" y2="195.50" stroke="#7a7a7a" stroke-width="1.3"/><line x1="521.92" y1="143.50" x2="521.92" y2="169.50" stroke="#7a7a7a" stroke-width="1.3"/><line x1="521.92" y1="117.50" x2="521.92" y2="143.50" stroke="#7a7a7a" stroke-width="1.3"/><line x1="521.92" y1="91.50" x2="521.92" y2="117.50" stroke="#7a7a7a" stroke-width="1.3"/><line x1="521.92" y1="82" x2="521.92" y2="91.50" stroke="#7a7a7a" stroke-width="1.3"/><line x1="521.92" y1="403.50" x2="521.92" y2="408" stroke="#7a7a7a" stroke-width="1.3"/><line x1="546.46" y1="377.50" x2="546.46" y2="403.50" stroke="#7a7a7a" stroke-width="1.3"/><line x1="546.46" y1="351.50" x2="546.46" y2="377.50" stroke="#7a7a7a" stroke-width="1.3"/><line x1="546.46" y1="325.50" x2="546.46" y2="351.50" stroke="#1d4a1d" stroke-width="1.3"/><line x1="546.46" y1="299.50" x2="546.46" y2="325.50" stroke="#1d4a1d" stroke-width="1.3"/><line x1="546.46" y1="273.50" x2="546.46" y2="299.50" stroke="#1d4a1d" stroke-width="1.3"/><line x1="546.46" y1="247.50" x2="546.46" y2="273.50" stroke="#1d4a1d" stroke-width="1.3"/><line x1="546.46" y1="221.50" x2="546.46" y2="247.50" stroke="#7a7a7a" stroke-width="1.3"/><line x1="546.46" y1="195.50" x2="546.46" y2="221.50" stroke="#7a7a7a" stroke-width="1.3"/><line x1="546.46" y1="169.50" x2="546.46" y2="195.50" stroke="#7a7a7a" stroke-width="1.3"/><line x1="546.46" y1="143.50" x2="546.46" y2="169.50" stroke="#7a7a7a" stroke-width="1.3"/><line x1="546.46" y1="117.50" x2="546.46" y2="143.50" stroke="#7a7a7a" stroke-width="1.3"/><line x1="546.46" y1="91.50" x2="546.46" y2="117.50" stroke="#7a7a7a" stroke-width="1.3"/><line x1="546.46" y1="82" x2="546.46" y2="91.50" stroke="#7a7a7a" stroke-width="1.3"/><line x1="546.46" y1="403.50" x2="546.46" y2="408" stroke="#7a7a7a" stroke-width="1.3"/><line x1="571.0" y1="377.50" x2="571.0" y2="403.50" stroke="#7a7a7a" stroke-width="1.3"/><line x1="571.0" y1="351.50" x2="571.0" y2="377.50" stroke="#7a7a7a" stroke-width="1.3"/><line x1="571.0" y1="325.50" x2="571.0" y2="351.50" stroke="#1d4a1d" stroke-width="1.3"/><line x1="571.0" y1="299.50" x2="571.0" y2="325.50" stroke="#1d4a1d" stroke-width="1.3"/><line x1="571.0" y1="273.50" x2="571.0" y2="299.50" stroke="#1d4a1d" stroke-width="1.3"/><line x1="571.0" y1="247.50" x2="571.0" y2="273.50" stroke="#1d4a1d" stroke-width="1.3"/><line x1="571.0" y1="221.50" x2="571.0" y2="247.50" stroke="#1d4a1d" stroke-width="1.3"/><line x1="571.0" y1="195.50" x2="571.0" y2="221.50" stroke="#7a7a7a" stroke-width="1.3"/><line x1="571.0" y1="169.50" x2="571.0" y2="195.50" stroke="#7a7a7a" stroke-width="1.3"/><line x1="571.0" y1="143.50" x2="571.0" y2="169.50" stroke="#7a7a7a" stroke-width="1.3"/><line x1="571.0" y1="117.50" x2="571.0" y2="143.50" stroke="#7a7a7a" stroke-width="1.3"/><line x1="571.0" y1="91.50" x2="571.0" y2="117.50" stroke="#7a7a7a" stroke-width="1.3"/><line x1="571.0" y1="82" x2="571.0" y2="91.50" stroke="#7a7a7a" stroke-width="1.3"/><line x1="571.0" y1="403.50" x2="571.0" y2="408" stroke="#7a7a7a" stroke-width="1.3"/><line x1="595.53" y1="377.50" x2="595.53" y2="403.50" stroke="#7a7a7a" stroke-width="1.3"/><line x1="595.53" y1="351.50" x2="595.53" y2="377.50" stroke="#7a7a7a" stroke-width="1.3"/><line x1="595.53" y1="325.50" x2="595.53" y2="351.50" stroke="#1d4a1d" stroke-width="1.3"/><line x1="595.53" y1="299.50" x2="595.53" y2="325.50" stroke="#1d4a1d" stroke-width="1.3"/><line x1="595.53" y1="273.50" x2="595.53" y2="299.50" stroke="#1d4a1d" stroke-width="1.3"/><line x1="595.53" y1="247.50" x2="595.53" y2="273.50" stroke="#1d4a1d" stroke-width="1.3"/><line x1="595.53" y1="221.50" x2="595.53" y2="247.50" stroke="#1d4a1d" stroke-width="1.3"/><line x1="595.53" y1="195.50" x2="595.53" y2="221.50" stroke="#7a7a7a" stroke-width="1.3"/><line x1="595.53" y1="169.50" x2="595.53" y2="195.50" stroke="#7a7a7a" stroke-width="1.3"/><line x1="595.53" y1="143.50" x2="595.53" y2="169.50" stroke="#7a7a7a" stroke-width="1.3"/><line x1="595.53" y1="117.50" x2="595.53" y2="143.50" stroke="#7a7a7a" stroke-width="1.3"/><line x1="595.53" y1="91.50" x2="595.53" y2="117.50" stroke="#7a7a7a" stroke-width="1.3"/><line x1="595.53" y1="82" x2="595.53" y2="91.50" stroke="#7a7a7a" stroke-width="1.3"/><line x1="595.53" y1="403.50" x2="595.53" y2="408" stroke="#7a7a7a" stroke-width="1.3"/><line x1="620.07" y1="377.50" x2="620.07" y2="403.50" stroke="#7a7a7a" stroke-width="1.3"/><line x1="620.07" y1="351.50" x2="620.07" y2="377.50" stroke="#1d4a1d" stroke-width="1.3"/><line x1="620.07" y1="325.50" x2="620.07" y2="351.50" stroke="#1d4a1d" stroke-width="1.3"/><line x1="620.07" y1="299.50" x2="620.07" y2="325.50" stroke="#1d4a1d" stroke-width="1.3"/><line x1="620.07" y1="273.50" x2="620.07" y2="299.50" stroke="#1d4a1d" stroke-width="1.3"/><line x1="620.07" y1="247.50" x2="620.07" y2="273.50" stroke="#1d4a1d" stroke-width="1.3"/><line x1="620.07" y1="221.50" x2="620.07" y2="247.50" stroke="#1d4a1d" stroke-width="1.3"/><line x1="620.07" y1="195.50" x2="620.07" y2="221.50" stroke="#7a7a7a" stroke-width="1.3"/><line x1="620.07" y1="169.50" x2="620.07" y2="195.50" stroke="#7a7a7a" stroke-width="1.3"/><line x1="620.07" y1="143.50" x2="620.07" y2="169.50" stroke="#7a7a7a" stroke-width="1.3"/><line x1="620.07" y1="117.50" x2="620.07" y2="143.50" stroke="#7a7a7a" stroke-width="1.3"/><line x1="620.07" y1="91.50" x2="620.07" y2="117.50" stroke="#7a7a7a" stroke-width="1.3"/><line x1="620.07" y1="82" x2="620.07" y2="91.50" stroke="#7a7a7a" stroke-width="1.3"/><line x1="620.07" y1="403.50" x2="620.07" y2="408" stroke="#7a7a7a" stroke-width="1.3"/><line x1="644.6" y1="377.50" x2="644.6" y2="403.50" stroke="#7a7a7a" stroke-width="1.3"/><line x1="644.6" y1="351.50" x2="644.6" y2="377.50" stroke="#1d4a1d" stroke-width="1.3"/><line x1="644.6" y1="325.50" x2="644.6" y2="351.50" stroke="#1d4a1d" stroke-width="1.3"/><line x1="644.6" y1="299.50" x2="644.6" y2="325.50" stroke="#1d4a1d" stroke-width="1.3"/><line x1="644.6" y1="273.50" x2="644.6" y2="299.50" stroke="#1d4a1d" stroke-width="1.3"/><line x1="644.6" y1="247.50" x2="644.6" y2="273.50" stroke="#1d4a1d" stroke-width="1.3"/><line x1="644.6" y1="221.50" x2="644.6" y2="247.50" stroke="#1d4a1d" stroke-width="1.3"/><line x1="644.6" y1="195.50" x2="644.6" y2="221.50" stroke="#7a7a7a" stroke-width="1.3"/><line x1="644.6" y1="169.50" x2="644.6" y2="195.50" stroke="#7a7a7a" stroke-width="1.3"/><line x1="644.6" y1="143.50" x2="644.6" y2="169.50" stroke="#7a7a7a" stroke-width="1.3"/><line x1="644.6" y1="117.50" x2="644.6" y2="143.50" stroke="#7a7a7a" stroke-width="1.3"/><line x1="644.6" y1="91.50" x2="644.6" y2="117.50" stroke="#7a7a7a" stroke-width="1.3"/><line x1="644.6" y1="82" x2="644.6" y2="91.50" stroke="#7a7a7a" stroke-width="1.3"/><line x1="644.6" y1="403.50" x2="644.6" y2="408" stroke="#7a7a7a" stroke-width="1.3"/><line x1="153.90" y1="403.5" x2="178.44" y2="403.5" stroke="#7a7a7a" stroke-width="1.3"/><line x1="178.44" y1="403.5" x2="202.97" y2="403.5" stroke="#7a7a7a" stroke-width="1.3"/><line x1="202.97" y1="403.5" x2="227.50" y2="403.5" stroke="#7a7a7a" stroke-width="1.3"/><line x1="227.50" y1="403.5" x2="252.04" y2="403.5" stroke="#7a7a7a" stroke-width="1.3"/><line x1="252.04" y1="403.5" x2="276.57" y2="403.5" stroke="#7a7a7a" stroke-width="1.3"/><line x1="276.57" y1="403.5" x2="301.11" y2="403.5" stroke="#7a7a7a" stroke-width="1.3"/><line x1="301.11" y1="403.5" x2="325.64" y2="403.5" stroke="#7a7a7a" stroke-width="1.3"/><line x1="325.64" y1="403.5" x2="350.18" y2="403.5" stroke="#7a7a7a" stroke-width="1.3"/><line x1="350.18" y1="403.5" x2="374.72" y2="403.5" stroke="#7a7a7a" stroke-width="1.3"/><line x1="374.72" y1="403.5" x2="399.25" y2="403.5" stroke="#7a7a7a" stroke-width="1.3"/><line x1="399.25" y1="403.5" x2="423.78" y2="403.5" stroke="#7a7a7a" stroke-width="1.3"/><line x1="423.78" y1="403.5" x2="448.32" y2="403.5" stroke="#7a7a7a" stroke-width="1.3"/><line x1="448.32" y1="403.5" x2="472.86" y2="403.5" stroke="#7a7a7a" stroke-width="1.3"/><line x1="472.86" y1="403.5" x2="497.39" y2="403.5" stroke="#7a7a7a" stroke-width="1.3"/><line x1="497.39" y1="403.5" x2="521.92" y2="403.5" stroke="#7a7a7a" stroke-width="1.3"/><line x1="521.92" y1="403.5" x2="546.46" y2="403.5" stroke="#7a7a7a" stroke-width="1.3"/><line x1="546.46" y1="403.5" x2="571.00" y2="403.5" stroke="#7a7a7a" stroke-width="1.3"/><line x1="571.00" y1="403.5" x2="595.53" y2="403.5" stroke="#7a7a7a" stroke-width="1.3"/><line x1="595.53" y1="403.5" x2="620.07" y2="403.5" stroke="#7a7a7a" stroke-width="1.3"/><line x1="620.07" y1="403.5" x2="644.60" y2="403.5" stroke="#7a7a7a" stroke-width="1.3"/><line x1="153.90" y1="377.5" x2="178.44" y2="377.5" stroke="#7a7a7a" stroke-width="1.3"/><line x1="178.44" y1="377.5" x2="202.97" y2="377.5" stroke="#7a7a7a" stroke-width="1.3"/><line x1="202.97" y1="377.5" x2="227.50" y2="377.5" stroke="#7a7a7a" stroke-width="1.3"/><line x1="227.50" y1="377.5" x2="252.04" y2="377.5" stroke="#7a7a7a" stroke-width="1.3"/><line x1="252.04" y1="377.5" x2="276.57" y2="377.5" stroke="#7a7a7a" stroke-width="1.3"/><line x1="276.57" y1="377.5" x2="301.11" y2="377.5" stroke="#7a7a7a" stroke-width="1.3"/><line x1="301.11" y1="377.5" x2="325.64" y2="377.5" stroke="#7a7a7a" stroke-width="1.3"/><line x1="325.64" y1="377.5" x2="350.18" y2="377.5" stroke="#7a7a7a" stroke-width="1.3"/><line x1="350.18" y1="377.5" x2="374.72" y2="377.5" stroke="#1d4a1d" stroke-width="1.3"/><line x1="374.72" y1="377.5" x2="399.25" y2="377.5" stroke="#1d4a1d" stroke-width="1.3"/><line x1="399.25" y1="377.5" x2="423.78" y2="377.5" stroke="#1d4a1d" stroke-width="1.3"/><line x1="423.78" y1="377.5" x2="448.32" y2="377.5" stroke="#7a7a7a" stroke-width="1.3"/><line x1="448.32" y1="377.5" x2="472.86" y2="377.5" stroke="#7a7a7a" stroke-width="1.3"/><line x1="472.86" y1="377.5" x2="497.39" y2="377.5" stroke="#7a7a7a" stroke-width="1.3"/><line x1="497.39" y1="377.5" x2="521.92" y2="377.5" stroke="#7a7a7a" stroke-width="1.3"/><line x1="521.92" y1="377.5" x2="546.46" y2="377.5" stroke="#7a7a7a" stroke-width="1.3"/><line x1="546.46" y1="377.5" x2="571.00" y2="377.5" stroke="#7a7a7a" stroke-width="1.3"/><line x1="571.00" y1="377.5" x2="595.53" y2="377.5" stroke="#7a7a7a" stroke-width="1.3"/><line x1="595.53" y1="377.5" x2="620.07" y2="377.5" stroke="#7a7a7a" stroke-width="1.3"/><line x1="620.07" y1="377.5" x2="644.60" y2="377.5" stroke="#1d4a1d" stroke-width="1.3"/><line x1="153.90" y1="351.5" x2="178.44" y2="351.5" stroke="#7a7a7a" stroke-width="1.3"/><line x1="178.44" y1="351.5" x2="202.97" y2="351.5" stroke="#7a7a7a" stroke-width="1.3"/><line x1="202.97" y1="351.5" x2="227.50" y2="351.5" stroke="#7a7a7a" stroke-width="1.3"/><line x1="227.50" y1="351.5" x2="252.04" y2="351.5" stroke="#7a7a7a" stroke-width="1.3"/><line x1="252.04" y1="351.5" x2="276.57" y2="351.5" stroke="#7a7a7a" stroke-width="1.3"/><line x1="276.57" y1="351.5" x2="301.11" y2="351.5" stroke="#7a7a7a" stroke-width="1.3"/><line x1="301.11" y1="351.5" x2="325.64" y2="351.5" stroke="#1d4a1d" stroke-width="1.3"/><line x1="325.64" y1="351.5" x2="350.18" y2="351.5" stroke="#1d4a1d" stroke-width="1.3"/><line x1="350.18" y1="351.5" x2="374.72" y2="351.5" stroke="#1d4a1d" stroke-width="1.3"/><line x1="374.72" y1="351.5" x2="399.25" y2="351.5" stroke="#1d4a1d" stroke-width="1.3"/><line x1="399.25" y1="351.5" x2="423.78" y2="351.5" stroke="#1d4a1d" stroke-width="1.3"/><line x1="423.78" y1="351.5" x2="448.32" y2="351.5" stroke="#1d4a1d" stroke-width="1.3"/><line x1="448.32" y1="351.5" x2="472.86" y2="351.5" stroke="#1d4a1d" stroke-width="1.3"/><line x1="472.86" y1="351.5" x2="497.39" y2="351.5" stroke="#1d4a1d" stroke-width="1.3"/><line x1="497.39" y1="351.5" x2="521.92" y2="351.5" stroke="#1d4a1d" stroke-width="1.3"/><line x1="521.92" y1="351.5" x2="546.46" y2="351.5" stroke="#1d4a1d" stroke-width="1.3"/><line x1="546.46" y1="351.5" x2="571.00" y2="351.5" stroke="#1d4a1d" stroke-width="1.3"/><line x1="571.00" y1="351.5" x2="595.53" y2="351.5" stroke="#1d4a1d" stroke-width="1.3"/><line x1="595.53" y1="351.5" x2="620.07" y2="351.5" stroke="#1d4a1d" stroke-width="1.3"/><line x1="620.07" y1="351.5" x2="644.60" y2="351.5" stroke="#1d4a1d" stroke-width="1.3"/><line x1="153.90" y1="325.5" x2="178.44" y2="325.5" stroke="#7a7a7a" stroke-width="1.3"/><line x1="178.44" y1="325.5" x2="202.97" y2="325.5" stroke="#7a7a7a" stroke-width="1.3"/><line x1="202.97" y1="325.5" x2="227.50" y2="325.5" stroke="#7a7a7a" stroke-width="1.3"/><line x1="227.50" y1="325.5" x2="252.04" y2="325.5" stroke="#7a7a7a" stroke-width="1.3"/><line x1="252.04" y1="325.5" x2="276.57" y2="325.5" stroke="#7a7a7a" stroke-width="1.3"/><line x1="276.57" y1="325.5" x2="301.11" y2="325.5" stroke="#7a7a7a" stroke-width="1.3"/><line x1="301.11" y1="325.5" x2="325.64" y2="325.5" stroke="#1d4a1d" stroke-width="1.3"/><line x1="325.64" y1="325.5" x2="350.18" y2="325.5" stroke="#1d4a1d" stroke-width="1.3"/><line x1="350.18" y1="325.5" x2="374.72" y2="325.5" stroke="#1d4a1d" stroke-width="1.3"/><line x1="374.72" y1="325.5" x2="399.25" y2="325.5" stroke="#1d4a1d" stroke-width="1.3"/><line x1="399.25" y1="325.5" x2="423.78" y2="325.5" stroke="#1d4a1d" stroke-width="1.3"/><line x1="423.78" y1="325.5" x2="448.32" y2="325.5" stroke="#1d4a1d" stroke-width="1.3"/><line x1="448.32" y1="325.5" x2="472.86" y2="325.5" stroke="#1d4a1d" stroke-width="1.3"/><line x1="472.86" y1="325.5" x2="497.39" y2="325.5" stroke="#1d4a1d" stroke-width="1.3"/><line x1="497.39" y1="325.5" x2="521.92" y2="325.5" stroke="#1d4a1d" stroke-width="1.3"/><line x1="521.92" y1="325.5" x2="546.46" y2="325.5" stroke="#1d4a1d" stroke-width="1.3"/><line x1="546.46" y1="325.5" x2="571.00" y2="325.5" stroke="#1d4a1d" stroke-width="1.3"/><line x1="571.00" y1="325.5" x2="595.53" y2="325.5" stroke="#1d4a1d" stroke-width="1.3"/><line x1="595.53" y1="325.5" x2="620.07" y2="325.5" stroke="#1d4a1d" stroke-width="1.3"/><line x1="620.07" y1="325.5" x2="644.60" y2="325.5" stroke="#1d4a1d" stroke-width="1.3"/><line x1="153.90" y1="299.5" x2="178.44" y2="299.5" stroke="#7a7a7a" stroke-width="1.3"/><line x1="178.44" y1="299.5" x2="202.97" y2="299.5" stroke="#7a7a7a" stroke-width="1.3"/><line x1="202.97" y1="299.5" x2="227.50" y2="299.5" stroke="#7a7a7a" stroke-width="1.3"/><line x1="227.50" y1="299.5" x2="252.04" y2="299.5" stroke="#7a7a7a" stroke-width="1.3"/><line x1="252.04" y1="299.5" x2="276.57" y2="299.5" stroke="#7a7a7a" stroke-width="1.3"/><line x1="276.57" y1="299.5" x2="301.11" y2="299.5" stroke="#7a7a7a" stroke-width="1.3"/><line x1="301.11" y1="299.5" x2="325.64" y2="299.5" stroke="#1d4a1d" stroke-width="1.3"/><line x1="325.64" y1="299.5" x2="350.18" y2="299.5" stroke="#1d4a1d" stroke-width="1.3"/><line x1="350.18" y1="299.5" x2="374.72" y2="299.5" stroke="#1d4a1d" stroke-width="1.3"/><line x1="374.72" y1="299.5" x2="399.25" y2="299.5" stroke="#1d4a1d" stroke-width="1.3"/><line x1="399.25" y1="299.5" x2="423.78" y2="299.5" stroke="#1d4a1d" stroke-width="1.3"/><line x1="423.78" y1="299.5" x2="448.32" y2="299.5" stroke="#1d4a1d" stroke-width="1.3"/><line x1="448.32" y1="299.5" x2="472.86" y2="299.5" stroke="#1d4a1d" stroke-width="1.3"/><line x1="472.86" y1="299.5" x2="497.39" y2="299.5" stroke="#1d4a1d" stroke-width="1.3"/><line x1="497.39" y1="299.5" x2="521.92" y2="299.5" stroke="#1d4a1d" stroke-width="1.3"/><line x1="521.92" y1="299.5" x2="546.46" y2="299.5" stroke="#1d4a1d" stroke-width="1.3"/><line x1="546.46" y1="299.5" x2="571.00" y2="299.5" stroke="#1d4a1d" stroke-width="1.3"/><line x1="571.00" y1="299.5" x2="595.53" y2="299.5" stroke="#1d4a1d" stroke-width="1.3"/><line x1="595.53" y1="299.5" x2="620.07" y2="299.5" stroke="#1d4a1d" stroke-width="1.3"/><line x1="620.07" y1="299.5" x2="644.60" y2="299.5" stroke="#1d4a1d" stroke-width="1.3"/><line x1="153.90" y1="273.5" x2="178.44" y2="273.5" stroke="#7a7a7a" stroke-width="1.3"/><line x1="178.44" y1="273.5" x2="202.97" y2="273.5" stroke="#7a7a7a" stroke-width="1.3"/><line x1="202.97" y1="273.5" x2="227.50" y2="273.5" stroke="#7a7a7a" stroke-width="1.3"/><line x1="227.50" y1="273.5" x2="252.04" y2="273.5" stroke="#7a7a7a" stroke-width="1.3"/><line x1="252.04" y1="273.5" x2="276.57" y2="273.5" stroke="#7a7a7a" stroke-width="1.3"/><line x1="276.57" y1="273.5" x2="301.11" y2="273.5" stroke="#7a7a7a" stroke-width="1.3"/><line x1="301.11" y1="273.5" x2="325.64" y2="273.5" stroke="#1d4a1d" stroke-width="1.3"/><line x1="325.64" y1="273.5" x2="350.18" y2="273.5" stroke="#1d4a1d" stroke-width="1.3"/><line x1="350.18" y1="273.5" x2="374.72" y2="273.5" stroke="#1d4a1d" stroke-width="1.3"/><line x1="374.72" y1="273.5" x2="399.25" y2="273.5" stroke="#1d4a1d" stroke-width="1.3"/><line x1="399.25" y1="273.5" x2="423.78" y2="273.5" stroke="#1d4a1d" stroke-width="1.3"/><line x1="423.78" y1="273.5" x2="448.32" y2="273.5" stroke="#1d4a1d" stroke-width="1.3"/><line x1="448.32" y1="273.5" x2="472.86" y2="273.5" stroke="#1d4a1d" stroke-width="1.3"/><line x1="472.86" y1="273.5" x2="497.39" y2="273.5" stroke="#1d4a1d" stroke-width="1.3"/><line x1="497.39" y1="273.5" x2="521.92" y2="273.5" stroke="#1d4a1d" stroke-width="1.3"/><line x1="521.92" y1="273.5" x2="546.46" y2="273.5" stroke="#1d4a1d" stroke-width="1.3"/><line x1="546.46" y1="273.5" x2="571.00" y2="273.5" stroke="#1d4a1d" stroke-width="1.3"/><line x1="571.00" y1="273.5" x2="595.53" y2="273.5" stroke="#1d4a1d" stroke-width="1.3"/><line x1="595.53" y1="273.5" x2="620.07" y2="273.5" stroke="#1d4a1d" stroke-width="1.3"/><line x1="620.07" y1="273.5" x2="644.60" y2="273.5" stroke="#1d4a1d" stroke-width="1.3"/><line x1="153.90" y1="247.5" x2="178.44" y2="247.5" stroke="#7a7a7a" stroke-width="1.3"/><line x1="178.44" y1="247.5" x2="202.97" y2="247.5" stroke="#7a7a7a" stroke-width="1.3"/><line x1="202.97" y1="247.5" x2="227.50" y2="247.5" stroke="#7a7a7a" stroke-width="1.3"/><line x1="227.50" y1="247.5" x2="252.04" y2="247.5" stroke="#7a7a7a" stroke-width="1.3"/><line x1="252.04" y1="247.5" x2="276.57" y2="247.5" stroke="#7a7a7a" stroke-width="1.3"/><line x1="276.57" y1="247.5" x2="301.11" y2="247.5" stroke="#7a7a7a" stroke-width="1.3"/><line x1="301.11" y1="247.5" x2="325.64" y2="247.5" stroke="#7a7a7a" stroke-width="1.3"/><line x1="325.64" y1="247.5" x2="350.18" y2="247.5" stroke="#1d4a1d" stroke-width="1.3"/><line x1="350.18" y1="247.5" x2="374.72" y2="247.5" stroke="#1d4a1d" stroke-width="1.3"/><line x1="374.72" y1="247.5" x2="399.25" y2="247.5" stroke="#1d4a1d" stroke-width="1.3"/><line x1="399.25" y1="247.5" x2="423.78" y2="247.5" stroke="#1d4a1d" stroke-width="1.3"/><line x1="423.78" y1="247.5" x2="448.32" y2="247.5" stroke="#1d4a1d" stroke-width="1.3"/><line x1="448.32" y1="247.5" x2="472.86" y2="247.5" stroke="#1d4a1d" stroke-width="1.3"/><line x1="472.86" y1="247.5" x2="497.39" y2="247.5" stroke="#1d4a1d" stroke-width="1.3"/><line x1="497.39" y1="247.5" x2="521.92" y2="247.5" stroke="#1d4a1d" stroke-width="1.3"/><line x1="521.92" y1="247.5" x2="546.46" y2="247.5" stroke="#1d4a1d" stroke-width="1.3"/><line x1="546.46" y1="247.5" x2="571.00" y2="247.5" stroke="#1d4a1d" stroke-width="1.3"/><line x1="571.00" y1="247.5" x2="595.53" y2="247.5" stroke="#1d4a1d" stroke-width="1.3"/><line x1="595.53" y1="247.5" x2="620.07" y2="247.5" stroke="#1d4a1d" stroke-width="1.3"/><line x1="620.07" y1="247.5" x2="644.60" y2="247.5" stroke="#1d4a1d" stroke-width="1.3"/><line x1="153.90" y1="221.5" x2="178.44" y2="221.5" stroke="#7a7a7a" stroke-width="1.3"/><line x1="178.44" y1="221.5" x2="202.97" y2="221.5" stroke="#7a7a7a" stroke-width="1.3"/><line x1="202.97" y1="221.5" x2="227.50" y2="221.5" stroke="#7a7a7a" stroke-width="1.3"/><line x1="227.50" y1="221.5" x2="252.04" y2="221.5" stroke="#7a7a7a" stroke-width="1.3"/><line x1="252.04" y1="221.5" x2="276.57" y2="221.5" stroke="#7a7a7a" stroke-width="1.3"/><line x1="276.57" y1="221.5" x2="301.11" y2="221.5" stroke="#7a7a7a" stroke-width="1.3"/><line x1="301.11" y1="221.5" x2="325.64" y2="221.5" stroke="#7a7a7a" stroke-width="1.3"/><line x1="325.64" y1="221.5" x2="350.18" y2="221.5" stroke="#7a7a7a" stroke-width="1.3"/><line x1="350.18" y1="221.5" x2="374.72" y2="221.5" stroke="#7a7a7a" stroke-width="1.3"/><line x1="374.72" y1="221.5" x2="399.25" y2="221.5" stroke="#7a7a7a" stroke-width="1.3"/><line x1="399.25" y1="221.5" x2="423.78" y2="221.5" stroke="#7a7a7a" stroke-width="1.3"/><line x1="423.78" y1="221.5" x2="448.32" y2="221.5" stroke="#7a7a7a" stroke-width="1.3"/><line x1="448.32" y1="221.5" x2="472.86" y2="221.5" stroke="#7a7a7a" stroke-width="1.3"/><line x1="472.86" y1="221.5" x2="497.39" y2="221.5" stroke="#7a7a7a" stroke-width="1.3"/><line x1="497.39" y1="221.5" x2="521.92" y2="221.5" stroke="#7a7a7a" stroke-width="1.3"/><line x1="521.92" y1="221.5" x2="546.46" y2="221.5" stroke="#7a7a7a" stroke-width="1.3"/><line x1="546.46" y1="221.5" x2="571.00" y2="221.5" stroke="#7a7a7a" stroke-width="1.3"/><line x1="571.00" y1="221.5" x2="595.53" y2="221.5" stroke="#1d4a1d" stroke-width="1.3"/><line x1="595.53" y1="221.5" x2="620.07" y2="221.5" stroke="#1d4a1d" stroke-width="1.3"/><line x1="620.07" y1="221.5" x2="644.60" y2="221.5" stroke="#1d4a1d" stroke-width="1.3"/><line x1="153.90" y1="195.5" x2="178.44" y2="195.5" stroke="#7a7a7a" stroke-width="1.3"/><line x1="178.44" y1="195.5" x2="202.97" y2="195.5" stroke="#7a7a7a" stroke-width="1.3"/><line x1="202.97" y1="195.5" x2="227.50" y2="195.5" stroke="#7a7a7a" stroke-width="1.3"/><line x1="227.50" y1="195.5" x2="252.04" y2="195.5" stroke="#7a7a7a" stroke-width="1.3"/><line x1="252.04" y1="195.5" x2="276.57" y2="195.5" stroke="#7a7a7a" stroke-width="1.3"/><line x1="276.57" y1="195.5" x2="301.11" y2="195.5" stroke="#7a7a7a" stroke-width="1.3"/><line x1="301.11" y1="195.5" x2="325.64" y2="195.5" stroke="#7a7a7a" stroke-width="1.3"/><line x1="325.64" y1="195.5" x2="350.18" y2="195.5" stroke="#7a7a7a" stroke-width="1.3"/><line x1="350.18" y1="195.5" x2="374.72" y2="195.5" stroke="#7a7a7a" stroke-width="1.3"/><line x1="374.72" y1="195.5" x2="399.25" y2="195.5" stroke="#7a7a7a" stroke-width="1.3"/><line x1="399.25" y1="195.5" x2="423.78" y2="195.5" stroke="#7a7a7a" stroke-width="1.3"/><line x1="423.78" y1="195.5" x2="448.32" y2="195.5" stroke="#7a7a7a" stroke-width="1.3"/><line x1="448.32" y1="195.5" x2="472.86" y2="195.5" stroke="#7a7a7a" stroke-width="1.3"/><line x1="472.86" y1="195.5" x2="497.39" y2="195.5" stroke="#7a7a7a" stroke-width="1.3"/><line x1="497.39" y1="195.5" x2="521.92" y2="195.5" stroke="#7a7a7a" stroke-width="1.3"/><line x1="521.92" y1="195.5" x2="546.46" y2="195.5" stroke="#7a7a7a" stroke-width="1.3"/><line x1="546.46" y1="195.5" x2="571.00" y2="195.5" stroke="#7a7a7a" stroke-width="1.3"/><line x1="571.00" y1="195.5" x2="595.53" y2="195.5" stroke="#7a7a7a" stroke-width="1.3"/><line x1="595.53" y1="195.5" x2="620.07" y2="195.5" stroke="#7a7a7a" stroke-width="1.3"/><line x1="620.07" y1="195.5" x2="644.60" y2="195.5" stroke="#7a7a7a" stroke-width="1.3"/><line x1="153.90" y1="169.5" x2="178.44" y2="169.5" stroke="#7a7a7a" stroke-width="1.3"/><line x1="178.44" y1="169.5" x2="202.97" y2="169.5" stroke="#7a7a7a" stroke-width="1.3"/><line x1="202.97" y1="169.5" x2="227.50" y2="169.5" stroke="#7a7a7a" stroke-width="1.3"/><line x1="227.50" y1="169.5" x2="252.04" y2="169.5" stroke="#7a7a7a" stroke-width="1.3"/><line x1="252.04" y1="169.5" x2="276.57" y2="169.5" stroke="#7a7a7a" stroke-width="1.3"/><line x1="276.57" y1="169.5" x2="301.11" y2="169.5" stroke="#7a7a7a" stroke-width="1.3"/><line x1="301.11" y1="169.5" x2="325.64" y2="169.5" stroke="#7a7a7a" stroke-width="1.3"/><line x1="325.64" y1="169.5" x2="350.18" y2="169.5" stroke="#7a7a7a" stroke-width="1.3"/><line x1="350.18" y1="169.5" x2="374.72" y2="169.5" stroke="#7a7a7a" stroke-width="1.3"/><line x1="374.72" y1="169.5" x2="399.25" y2="169.5" stroke="#7a7a7a" stroke-width="1.3"/><line x1="399.25" y1="169.5" x2="423.78" y2="169.5" stroke="#7a7a7a" stroke-width="1.3"/><line x1="423.78" y1="169.5" x2="448.32" y2="169.5" stroke="#7a7a7a" stroke-width="1.3"/><line x1="448.32" y1="169.5" x2="472.86" y2="169.5" stroke="#7a7a7a" stroke-width="1.3"/><line x1="472.86" y1="169.5" x2="497.39" y2="169.5" stroke="#7a7a7a" stroke-width="1.3"/><line x1="497.39" y1="169.5" x2="521.92" y2="169.5" stroke="#7a7a7a" stroke-width="1.3"/><line x1="521.92" y1="169.5" x2="546.46" y2="169.5" stroke="#7a7a7a" stroke-width="1.3"/><line x1="546.46" y1="169.5" x2="571.00" y2="169.5" stroke="#7a7a7a" stroke-width="1.3"/><line x1="571.00" y1="169.5" x2="595.53" y2="169.5" stroke="#7a7a7a" stroke-width="1.3"/><line x1="595.53" y1="169.5" x2="620.07" y2="169.5" stroke="#7a7a7a" stroke-width="1.3"/><line x1="620.07" y1="169.5" x2="644.60" y2="169.5" stroke="#7a7a7a" stroke-width="1.3"/><line x1="153.90" y1="143.5" x2="178.44" y2="143.5" stroke="#7a7a7a" stroke-width="1.3"/><line x1="178.44" y1="143.5" x2="202.97" y2="143.5" stroke="#7a7a7a" stroke-width="1.3"/><line x1="202.97" y1="143.5" x2="227.50" y2="143.5" stroke="#7a7a7a" stroke-width="1.3"/><line x1="227.50" y1="143.5" x2="252.04" y2="143.5" stroke="#7a7a7a" stroke-width="1.3"/><line x1="252.04" y1="143.5" x2="276.57" y2="143.5" stroke="#7a7a7a" stroke-width="1.3"/><line x1="276.57" y1="143.5" x2="301.11" y2="143.5" stroke="#7a7a7a" stroke-width="1.3"/><line x1="301.11" y1="143.5" x2="325.64" y2="143.5" stroke="#7a7a7a" stroke-width="1.3"/><line x1="325.64" y1="143.5" x2="350.18" y2="143.5" stroke="#7a7a7a" stroke-width="1.3"/><line x1="350.18" y1="143.5" x2="374.72" y2="143.5" stroke="#7a7a7a" stroke-width="1.3"/><line x1="374.72" y1="143.5" x2="399.25" y2="143.5" stroke="#7a7a7a" stroke-width="1.3"/><line x1="399.25" y1="143.5" x2="423.78" y2="143.5" stroke="#7a7a7a" stroke-width="1.3"/><line x1="423.78" y1="143.5" x2="448.32" y2="143.5" stroke="#7a7a7a" stroke-width="1.3"/><line x1="448.32" y1="143.5" x2="472.86" y2="143.5" stroke="#7a7a7a" stroke-width="1.3"/><line x1="472.86" y1="143.5" x2="497.39" y2="143.5" stroke="#7a7a7a" stroke-width="1.3"/><line x1="497.39" y1="143.5" x2="521.92" y2="143.5" stroke="#7a7a7a" stroke-width="1.3"/><line x1="521.92" y1="143.5" x2="546.46" y2="143.5" stroke="#7a7a7a" stroke-width="1.3"/><line x1="546.46" y1="143.5" x2="571.00" y2="143.5" stroke="#7a7a7a" stroke-width="1.3"/><line x1="571.00" y1="143.5" x2="595.53" y2="143.5" stroke="#7a7a7a" stroke-width="1.3"/><line x1="595.53" y1="143.5" x2="620.07" y2="143.5" stroke="#7a7a7a" stroke-width="1.3"/><line x1="620.07" y1="143.5" x2="644.60" y2="143.5" stroke="#7a7a7a" stroke-width="1.3"/><line x1="153.90" y1="117.5" x2="178.44" y2="117.5" stroke="#7a7a7a" stroke-width="1.3"/><line x1="178.44" y1="117.5" x2="202.97" y2="117.5" stroke="#7a7a7a" stroke-width="1.3"/><line x1="202.97" y1="117.5" x2="227.50" y2="117.5" stroke="#7a7a7a" stroke-width="1.3"/><line x1="227.50" y1="117.5" x2="252.04" y2="117.5" stroke="#7a7a7a" stroke-width="1.3"/><line x1="252.04" y1="117.5" x2="276.57" y2="117.5" stroke="#7a7a7a" stroke-width="1.3"/><line x1="276.57" y1="117.5" x2="301.11" y2="117.5" stroke="#7a7a7a" stroke-width="1.3"/><line x1="301.11" y1="117.5" x2="325.64" y2="117.5" stroke="#7a7a7a" stroke-width="1.3"/><line x1="325.64" y1="117.5" x2="350.18" y2="117.5" stroke="#7a7a7a" stroke-width="1.3"/><line x1="350.18" y1="117.5" x2="374.72" y2="117.5" stroke="#7a7a7a" stroke-width="1.3"/><line x1="374.72" y1="117.5" x2="399.25" y2="117.5" stroke="#7a7a7a" stroke-width="1.3"/><line x1="399.25" y1="117.5" x2="423.78" y2="117.5" stroke="#7a7a7a" stroke-width="1.3"/><line x1="423.78" y1="117.5" x2="448.32" y2="117.5" stroke="#7a7a7a" stroke-width="1.3"/><line x1="448.32" y1="117.5" x2="472.86" y2="117.5" stroke="#7a7a7a" stroke-width="1.3"/><line x1="472.86" y1="117.5" x2="497.39" y2="117.5" stroke="#7a7a7a" stroke-width="1.3"/><line x1="497.39" y1="117.5" x2="521.92" y2="117.5" stroke="#7a7a7a" stroke-width="1.3"/><line x1="521.92" y1="117.5" x2="546.46" y2="117.5" stroke="#7a7a7a" stroke-width="1.3"/><line x1="546.46" y1="117.5" x2="571.00" y2="117.5" stroke="#7a7a7a" stroke-width="1.3"/><line x1="571.00" y1="117.5" x2="595.53" y2="117.5" stroke="#7a7a7a" stroke-width="1.3"/><line x1="595.53" y1="117.5" x2="620.07" y2="117.5" stroke="#7a7a7a" stroke-width="1.3"/><line x1="620.07" y1="117.5" x2="644.60" y2="117.5" stroke="#7a7a7a" stroke-width="1.3"/><line x1="153.90" y1="91.5" x2="178.44" y2="91.5" stroke="#7a7a7a" stroke-width="1.3"/><line x1="178.44" y1="91.5" x2="202.97" y2="91.5" stroke="#7a7a7a" stroke-width="1.3"/><line x1="202.97" y1="91.5" x2="227.50" y2="91.5" stroke="#7a7a7a" stroke-width="1.3"/><line x1="227.50" y1="91.5" x2="252.04" y2="91.5" stroke="#7a7a7a" stroke-width="1.3"/><line x1="252.04" y1="91.5" x2="276.57" y2="91.5" stroke="#7a7a7a" stroke-width="1.3"/><line x1="276.57" y1="91.5" x2="301.11" y2="91.5" stroke="#7a7a7a" stroke-width="1.3"/><line x1="301.11" y1="91.5" x2="325.64" y2="91.5" stroke="#7a7a7a" stroke-width="1.3"/><line x1="325.64" y1="91.5" x2="350.18" y2="91.5" stroke="#7a7a7a" stroke-width="1.3"/><line x1="350.18" y1="91.5" x2="374.72" y2="91.5" stroke="#7a7a7a" stroke-width="1.3"/><line x1="374.72" y1="91.5" x2="399.25" y2="91.5" stroke="#7a7a7a" stroke-width="1.3"/><line x1="399.25" y1="91.5" x2="423.78" y2="91.5" stroke="#7a7a7a" stroke-width="1.3"/><line x1="423.78" y1="91.5" x2="448.32" y2="91.5" stroke="#7a7a7a" stroke-width="1.3"/><line x1="448.32" y1="91.5" x2="472.86" y2="91.5" stroke="#7a7a7a" stroke-width="1.3"/><line x1="472.86" y1="91.5" x2="497.39" y2="91.5" stroke="#7a7a7a" stroke-width="1.3"/><line x1="497.39" y1="91.5" x2="521.92" y2="91.5" stroke="#7a7a7a" stroke-width="1.3"/><line x1="521.92" y1="91.5" x2="546.46" y2="91.5" stroke="#7a7a7a" stroke-width="1.3"/><line x1="546.46" y1="91.5" x2="571.00" y2="91.5" stroke="#7a7a7a" stroke-width="1.3"/><line x1="571.00" y1="91.5" x2="595.53" y2="91.5" stroke="#7a7a7a" stroke-width="1.3"/><line x1="595.53" y1="91.5" x2="620.07" y2="91.5" stroke="#7a7a7a" stroke-width="1.3"/><line x1="620.07" y1="91.5" x2="644.60" y2="91.5" stroke="#7a7a7a" stroke-width="1.3"/><rect x="496.09" y="297.00" width="2.6" height="5" rx="0.6" fill="#10b810"/><rect x="373.42" y="349.00" width="2.6" height="5" rx="0.6" fill="#10b810"/><rect x="569.70" y="323.00" width="2.6" height="5" rx="0.6" fill="#10b810"/><rect x="618.77" y="245.00" width="2.6" height="5" rx="0.6" fill="#10b810"/><rect x="373.42" y="271.00" width="2.6" height="5" rx="0.6" fill="#10b810"/><rect x="422.48" y="349.00" width="2.6" height="5" rx="0.6" fill="#10b810"/><rect x="348.88" y="323.00" width="2.6" height="5" rx="0.6" fill="#10b810"/><rect x="618.77" y="323.00" width="2.6" height="5" rx="0.6" fill="#10b810"/><rect x="569.70" y="245.00" width="2.6" height="5" rx="0.6" fill="#10b810"/><rect x="422.48" y="271.00" width="2.6" height="5" rx="0.6" fill="#10b810"/><rect x="397.95" y="323.00" width="2.6" height="5" rx="0.6" fill="#10b810"/><rect x="471.56" y="349.00" width="2.6" height="5" rx="0.6" fill="#10b810"/><rect x="545.16" y="297.00" width="2.6" height="5" rx="0.6" fill="#10b810"/><rect x="520.62" y="349.00" width="2.6" height="5" rx="0.6" fill="#10b810"/><rect x="471.56" y="271.00" width="2.6" height="5" rx="0.6" fill="#10b810"/><rect x="324.34" y="297.00" width="2.6" height="5" rx="0.6" fill="#10b810"/><rect x="299.81" y="349.00" width="2.6" height="5" rx="0.6" fill="#10b810"/><rect x="594.23" y="297.00" width="2.6" height="5" rx="0.6" fill="#10b810"/><rect x="520.62" y="271.00" width="2.6" height="5" rx="0.6" fill="#10b810"/><rect x="447.02" y="323.00" width="2.6" height="5" rx="0.6" fill="#10b810"/><rect x="496.09" y="323.00" width="2.6" height="5" rx="0.6" fill="#10b810"/><rect x="569.70" y="349.00" width="2.6" height="5" rx="0.6" fill="#10b810"/><rect x="569.70" y="271.00" width="2.6" height="5" rx="0.6" fill="#10b810"/><rect x="348.88" y="349.00" width="2.6" height="5" rx="0.6" fill="#10b810"/><rect x="618.77" y="349.00" width="2.6" height="5" rx="0.6" fill="#10b810"/><rect x="373.42" y="375.00" width="2.6" height="5" rx="0.6" fill="#10b810"/><rect x="348.88" y="271.00" width="2.6" height="5" rx="0.6" fill="#10b810"/><rect x="397.95" y="349.00" width="2.6" height="5" rx="0.6" fill="#10b810"/><rect x="618.77" y="271.00" width="2.6" height="5" rx="0.6" fill="#10b810"/><rect x="397.95" y="271.00" width="2.6" height="5" rx="0.6" fill="#10b810"/><rect x="471.56" y="297.00" width="2.6" height="5" rx="0.6" fill="#10b810"/><rect x="594.23" y="271.00" width="2.6" height="5" rx="0.6" fill="#10b810"/><rect x="520.62" y="297.00" width="2.6" height="5" rx="0.6" fill="#10b810"/><rect x="545.16" y="323.00" width="2.6" height="5" rx="0.6" fill="#10b810"/><rect x="299.81" y="297.00" width="2.6" height="5" rx="0.6" fill="#10b810"/><rect x="324.34" y="323.00" width="2.6" height="5" rx="0.6" fill="#10b810"/><rect x="594.23" y="323.00" width="2.6" height="5" rx="0.6" fill="#10b810"/><rect x="594.23" y="245.00" width="2.6" height="5" rx="0.6" fill="#10b810"/><rect x="447.02" y="349.00" width="2.6" height="5" rx="0.6" fill="#10b810"/><rect x="447.02" y="271.00" width="2.6" height="5" rx="0.6" fill="#10b810"/><rect x="496.09" y="349.00" width="2.6" height="5" rx="0.6" fill="#10b810"/><rect x="496.09" y="271.00" width="2.6" height="5" rx="0.6" fill="#10b810"/><rect x="569.70" y="297.00" width="2.6" height="5" rx="0.6" fill="#10b810"/><rect x="348.88" y="297.00" width="2.6" height="5" rx="0.6" fill="#10b810"/><rect x="618.77" y="297.00" width="2.6" height="5" rx="0.6" fill="#10b810"/><rect x="373.42" y="323.00" width="2.6" height="5" rx="0.6" fill="#10b810"/><rect x="618.77" y="375.00" width="2.6" height="5" rx="0.6" fill="#10b810"/><rect x="348.88" y="375.00" width="2.6" height="5" rx="0.6" fill="#10b810"/><rect x="422.48" y="323.00" width="2.6" height="5" rx="0.6" fill="#10b810"/><rect x="397.95" y="375.00" width="2.6" height="5" rx="0.6" fill="#10b810"/><rect x="545.16" y="349.00" width="2.6" height="5" rx="0.6" fill="#10b810"/><rect x="471.56" y="323.00" width="2.6" height="5" rx="0.6" fill="#10b810"/><rect x="545.16" y="271.00" width="2.6" height="5" rx="0.6" fill="#10b810"/><rect x="324.34" y="349.00" width="2.6" height="5" rx="0.6" fill="#10b810"/><rect x="594.23" y="349.00" width="2.6" height="5" rx="0.6" fill="#10b810"/><rect x="520.62" y="323.00" width="2.6" height="5" rx="0.6" fill="#10b810"/><rect x="324.34" y="271.00" width="2.6" height="5" rx="0.6" fill="#10b810"/><rect x="299.81" y="323.00" width="2.6" height="5" rx="0.6" fill="#10b810"/><rect x="369" y="86" width="1.6" height="318" fill="#f2f25a"/><rect x="153" y="357" width="492" height="1.6" fill="#f2f25a"/><rect x="365.5" y="355.5" width="9" height="4.5" fill="#ffe800"/></svg>
<div class=t style="left:151.90px;top:408px;font-size:7.5px;line-height:9px;color:#5a5ad2;font-weight:normal;">0</div>
<div class=t style="left:197.84px;top:408px;font-size:7.5px;line-height:9px;color:#5a5ad2;font-weight:normal;">0,1</div>
<div class=t style="left:246.91px;top:408px;font-size:7.5px;line-height:9px;color:#5a5ad2;font-weight:normal;">0,2</div>
<div class=t style="left:295.98px;top:408px;font-size:7.5px;line-height:9px;color:#5a5ad2;font-weight:normal;">0,3</div>
<div class=t style="left:345.05px;top:408px;font-size:7.5px;line-height:9px;color:#5a5ad2;font-weight:normal;">0,4</div>
<div class=t style="left:394.12px;top:408px;font-size:7.5px;line-height:9px;color:#5a5ad2;font-weight:normal;">0,5</div>
<div class=t style="left:443.19px;top:408px;font-size:7.5px;line-height:9px;color:#5a5ad2;font-weight:normal;">0,6</div>
<div class=t style="left:492.26px;top:408px;font-size:7.5px;line-height:9px;color:#5a5ad2;font-weight:normal;">0,7</div>
<div class=t style="left:541.33px;top:408px;font-size:7.5px;line-height:9px;color:#5a5ad2;font-weight:normal;">0,8</div>
<div class=t style="left:590.40px;top:408px;font-size:7.5px;line-height:9px;color:#5a5ad2;font-weight:normal;">0,9</div>
<div class=t style="left:642.60px;top:408px;font-size:7.5px;line-height:9px;color:#5a5ad2;font-weight:normal;">1</div>
<div class=t style="left:648.00px;top:400px;font-size:7.5px;line-height:9px;color:#e04848;font-weight:normal;">0</div>
<div class=t style="left:648.00px;top:348px;font-size:7.5px;line-height:9px;color:#e04848;font-weight:normal;">1 000</div>
<div class=t style="left:648.00px;top:296px;font-size:7.5px;line-height:9px;color:#e04848;font-weight:normal;">2 000</div>
<div class=t style="left:648.00px;top:244px;font-size:7.5px;line-height:9px;color:#e04848;font-weight:normal;">3 000</div>
<div class=t style="left:648.00px;top:192px;font-size:7.5px;line-height:9px;color:#e04848;font-weight:normal;">4 000</div>
<div class=t style="left:648.00px;top:140px;font-size:7.5px;line-height:9px;color:#e04848;font-weight:normal;">5 000</div>
<div class=t style="left:648.00px;top:88px;font-size:7.5px;line-height:9px;color:#e04848;font-weight:normal;">6 000</div>
<div style="position:absolute;left:821px;top:74px;width:12px;height:49px;background:linear-gradient(90deg,#ffffff,#c2d8f0);border:1px solid #9ab0c8;border-right:none;box-sizing:border-box"></div>
<div style="position:absolute;left:819px;top:123px;width:13px;height:28px;background:#f6f6f6;border:1px solid #a8a8a8;border-top:none;box-sizing:border-box"></div>
<div class=t style="left:831px;top:78px;font-size:8px;line-height:9px;color:#303030;transform:rotate(90deg);transform-origin:0 0">Состояние</div>
<div class=t style="left:830px;top:130px;font-size:8px;line-height:9px;color:#303030;transform:rotate(90deg);transform-origin:0 0">3D</div>
<div style="position:absolute;left:838px;top:25px;width:1px;height:491px;background:#a6a6a6"></div>
<div style="position:absolute;left:840px;top:26px;width:120px;height:10px;background:#f7f7f7;border:1px solid #b0b0b0;border-right:none;box-sizing:border-box"></div>
<div class=t style="left:843.50px;top:27px;font-size:7.5px;line-height:9px;color:#2a2a2a;font-weight:normal;transform:scaleX(0.988);transform-origin:0 0;">Монитор</div>
<svg width="960" height="540"><path d="M940.5 29 v3 M938.5 32.5 h4 M940.5 32.5 v2.5" stroke="#333" stroke-width="1" fill="none"/><rect x="939.5" y="29" width="2" height="3.5" fill="none" stroke="#333" stroke-width="0.8"/><path d="M951 29.5 L956 34.5 M956 29.5 L951 34.5" stroke="#111" stroke-width="1.6"/></svg>
<svg width="960" height="540">
<defs>
<linearGradient id="lg1" x1="0" x2="1" y1="0" y2="0">
<stop offset="0" stop-color="#6a6664"/><stop offset="0.16" stop-color="#2a2625"/><stop offset="0.3" stop-color="#141212"/>
<stop offset="0.7" stop-color="#141212"/><stop offset="0.84" stop-color="#2a2625"/><stop offset="1" stop-color="#6a6664"/>
</linearGradient>
</defs>
<rect x="851" y="38" width="96" height="64" rx="1.5" fill="#a8a8a8"/>
<rect x="851.5" y="42" width="95" height="55" fill="url(#lg1)"/>
<rect x="851" y="38.5" width="96" height="3" rx="1" fill="#c4c4c4"/>
<rect x="851" y="97.5" width="96" height="3.5" rx="1" fill="#c0c0c0"/>
<line x1="867" y1="38" x2="867" y2="42" stroke="#707070" stroke-width="0.7"/><line x1="931" y1="38" x2="931" y2="42" stroke="#707070" stroke-width="0.7"/>
<line x1="867" y1="97" x2="867" y2="102" stroke="#707070" stroke-width="0.7"/><line x1="931" y1="97" x2="931" y2="102" stroke="#707070" stroke-width="0.7"/>
<g fill="none" stroke="#8e8e8e" stroke-width="3.8" stroke-linecap="round"><path d="M 922.29 73.73 A 22.6 22.6 0 0 1 903.73 92.29"/><path d="M 896.27 92.29 A 22.6 22.6 0 0 1 877.71 73.73"/><path d="M 877.71 66.27 A 22.6 22.6 0 0 1 896.27 47.71"/><path d="M 903.73 47.71 A 22.6 22.6 0 0 1 922.29 66.27"/></g>
<circle cx="900" cy="70" r="16.8" fill="#161414" stroke="#3a3838" stroke-width="1.2"/>
<g fill="none" stroke="#e42a2a" stroke-width="1.5">
<path d="M 890.8 63.6 A 10.5 10.5 0 0 1 910.2 71.5"/>
<path d="M 904.5 79.6 A 10.5 10.5 0 0 1 893 78.2"/>
</g>
<g fill="none" stroke="#e42a2a" stroke-width="2.3" stroke-linejoin="round">
<path d="M 886.3 73.8 L 896.2 62.5 L 898.8 73.8 M 889.6 70 L 898 70"/>
<path d="M 909.6 66.8 A 4.9 4.9 0 1 0 909.8 74.2"/>
</g>
</svg>
<div class=t style="left:840.00px;top:106px;font-size:8.5px;line-height:10px;color:#555555;font-weight:normal;transform:scaleX(0.927);transform-origin:0 0;">Давление [Бар]</div>
<div style="position:absolute;left:840px;top:115px;width:118px;height:1px;background:#b4b4b4"></div>
<div style="position:absolute;left:840px;top:116px;width:118px;height:1px;background:#dedede"></div>
<svg width="960" height="540"><circle cx="955.2" cy="110.50" r="3.6" fill="#9a9a9a"/><circle cx="955.2" cy="110.50" r="2.4" fill="#c4c4c4"/><path d="M953.9 111.90 L955.2 108.90 L956.5 111.90Z" fill="#444"/></svg>
<div class=t style="left:842.70px;top:118px;font-size:10px;line-height:11px;color:#1f8a3a;font-weight:bold;transform:scaleX(1.178);transform-origin:0 0;">Газ</div>
<div class=t style="left:923.20px;top:118px;font-size:10px;line-height:11px;color:#161c7c;font-weight:bold;">0.92</div>
<div style="position:absolute;left:947px;top:119px;width:8px;height:8px;background:linear-gradient(135deg,#d4d4d4,#f2f2f2);border:1px solid #bcbcbc;box-sizing:border-box"></div>
<svg width="960" height="540"><path d="M949.2 123.2 L950.5 125 L953 120.8" stroke="#2a3a8a" stroke-width="0.9" fill="none"/></svg>
<div class=t style="left:843.00px;top:130px;font-size:10px;line-height:11px;color:#8a7618;font-weight:bold;transform:scaleX(0.865);transform-origin:0 0;">MAP</div>
<div class=t style="left:923.20px;top:130px;font-size:10px;line-height:11px;color:#161c7c;font-weight:bold;">0.44</div>
<div style="position:absolute;left:947px;top:131px;width:8px;height:8px;background:linear-gradient(135deg,#d4d4d4,#f2f2f2);border:1px solid #bcbcbc;box-sizing:border-box"></div>
<svg width="960" height="540"><path d="M949.2 135.2 L950.5 137 L953 132.8" stroke="#2a3a8a" stroke-width="0.9" fill="none"/></svg>
<div class=t style="left:840.00px;top:144px;font-size:8.5px;line-height:10px;color:#555555;font-weight:normal;transform:scaleX(0.928);transform-origin:0 0;">Время впрыска / доза [ms]</div>
<div style="position:absolute;left:840px;top:155px;width:118px;height:1px;background:#b4b4b4"></div>
<div style="position:absolute;left:840px;top:156px;width:118px;height:1px;background:#dedede"></div>
<svg width="960" height="540"><circle cx="955.2" cy="149.50" r="3.6" fill="#9a9a9a"/><circle cx="955.2" cy="149.50" r="2.4" fill="#c4c4c4"/><path d="M953.9 150.90 L955.2 147.90 L956.5 150.90Z" fill="#444"/></svg>
<div class=t style="left:843.10px;top:156px;font-size:9.2px;line-height:10px;color:#2424c8;font-weight:bold;transform:scaleX(1.060);transform-origin:0 0;">Б1</div>
<div class=t style="left:865.00px;top:156px;font-size:9.2px;line-height:10px;color:#161c7c;font-weight:bold;transform:scaleX(1.069);transform-origin:0 0;">1.80</div>
<div style="position:absolute;left:888px;top:157px;width:8px;height:8px;background:linear-gradient(135deg,#d4d4d4,#f2f2f2);border:1px solid #bcbcbc;box-sizing:border-box"></div>
<svg width="960" height="540"><path d="M890.2 161.2 L891.5 163 L894 158.8" stroke="#2a3a8a" stroke-width="0.9" fill="none"/></svg>
<div class=t style="left:898.90px;top:156px;font-size:9.2px;line-height:10px;color:#1e6e1e;font-weight:bold;transform:scaleX(1.117);transform-origin:0 0;">Г1</div>
<div class=t style="left:918.70px;top:156px;font-size:9.2px;line-height:10px;color:#161c7c;font-weight:bold;transform:scaleX(1.165);transform-origin:0 0;">2.48</div>
<div style="position:absolute;left:942px;top:157px;width:8px;height:8px;background:linear-gradient(135deg,#d4d4d4,#f2f2f2);border:1px solid #bcbcbc;box-sizing:border-box"></div>
<svg width="960" height="540"><path d="M944.2 161.2 L945.5 163 L948 158.8" stroke="#2a3a8a" stroke-width="0.9" fill="none"/></svg>
<div class=t style="left:843.10px;top:167px;font-size:9.2px;line-height:10px;color:#3a3ad8;font-weight:bold;transform:scaleX(1.060);transform-origin:0 0;">Б2</div>
<div class=t style="left:865.00px;top:167px;font-size:9.2px;line-height:10px;color:#161c7c;font-weight:bold;transform:scaleX(1.069);transform-origin:0 0;">1.80</div>
<div style="position:absolute;left:888px;top:168px;width:8px;height:8px;background:linear-gradient(135deg,#d4d4d4,#f2f2f2);border:1px solid #bcbcbc;box-sizing:border-box"></div>
<svg width="960" height="540"><path d="M890.2 172.2 L891.5 174 L894 169.8" stroke="#2a3a8a" stroke-width="0.9" fill="none"/></svg>
<div class=t style="left:898.90px;top:167px;font-size:9.2px;line-height:10px;color:#1e8e1e;font-weight:bold;transform:scaleX(1.117);transform-origin:0 0;">Г2</div>
<div class=t style="left:918.70px;top:167px;font-size:9.2px;line-height:10px;color:#161c7c;font-weight:bold;transform:scaleX(1.165);transform-origin:0 0;">2.48</div>
<div style="position:absolute;left:942px;top:168px;width:8px;height:8px;background:linear-gradient(135deg,#d4d4d4,#f2f2f2);border:1px solid #bcbcbc;box-sizing:border-box"></div>
<svg width="960" height="540"><path d="M944.2 172.2 L945.5 174 L948 169.8" stroke="#2a3a8a" stroke-width="0.9" fill="none"/></svg>
<div class=t style="left:843.10px;top:178px;font-size:9.2px;line-height:10px;color:#4a62e0;font-weight:bold;transform:scaleX(1.060);transform-origin:0 0;">Б3</div>
<div class=t style="left:865.00px;top:178px;font-size:9.2px;line-height:10px;color:#161c7c;font-weight:bold;transform:scaleX(1.069);transform-origin:0 0;">1.81</div>
<div style="position:absolute;left:888px;top:179px;width:8px;height:8px;background:linear-gradient(135deg,#d4d4d4,#f2f2f2);border:1px solid #bcbcbc;box-sizing:border-box"></div>
<svg width="960" height="540"><path d="M890.2 183.2 L891.5 185 L894 180.8" stroke="#2a3a8a" stroke-width="0.9" fill="none"/></svg>
<div class=t style="left:898.90px;top:178px;font-size:9.2px;line-height:10px;color:#2ebe2e;font-weight:bold;transform:scaleX(1.117);transform-origin:0 0;">Г3</div>
<div class=t style="left:918.70px;top:178px;font-size:9.2px;line-height:10px;color:#161c7c;font-weight:bold;transform:scaleX(1.165);transform-origin:0 0;">2.50</div>
<div style="position:absolute;left:942px;top:179px;width:8px;height:8px;background:linear-gradient(135deg,#d4d4d4,#f2f2f2);border:1px solid #bcbcbc;box-sizing:border-box"></div>
<svg width="960" height="540"><path d="M944.2 183.2 L945.5 185 L948 180.8" stroke="#2a3a8a" stroke-width="0.9" fill="none"/></svg>
<div class=t style="left:843.10px;top:189px;font-size:9.2px;line-height:10px;color:#6a86f0;font-weight:bold;transform:scaleX(0.976);transform-origin:0 0;">Б4</div>
<div class=t style="left:865.00px;top:189px;font-size:9.2px;line-height:10px;color:#161c7c;font-weight:bold;transform:scaleX(1.069);transform-origin:0 0;">1.81</div>
<div style="position:absolute;left:888px;top:190px;width:8px;height:8px;background:linear-gradient(135deg,#d4d4d4,#f2f2f2);border:1px solid #bcbcbc;box-sizing:border-box"></div>
<svg width="960" height="540"><path d="M890.2 194.2 L891.5 196 L894 191.8" stroke="#2a3a8a" stroke-width="0.9" fill="none"/></svg>
<div class=t style="left:898.90px;top:189px;font-size:9.2px;line-height:10px;color:#3ee03e;font-weight:bold;transform:scaleX(1.017);transform-origin:0 0;">Г4</div>
<div class=t style="left:918.70px;top:189px;font-size:9.2px;line-height:10px;color:#161c7c;font-weight:bold;transform:scaleX(1.165);transform-origin:0 0;">2.50</div>
<div style="position:absolute;left:942px;top:190px;width:8px;height:8px;background:linear-gradient(135deg,#d4d4d4,#f2f2f2);border:1px solid #bcbcbc;box-sizing:border-box"></div>
<svg width="960" height="540"><path d="M944.2 194.2 L945.5 196 L948 191.8" stroke="#2a3a8a" stroke-width="0.9" fill="none"/></svg>
<svg width="960" height="540"><g><circle cx="850.8" cy="202.6" r="1.5" fill="#8a8a8a"/><circle cx="852.2" cy="204.8" r="1.3" fill="#111"/><line x1="845" y1="209.2" x2="849" y2="205" stroke="#0e7e34" stroke-width="2.4" stroke-linecap="round"/><ellipse cx="849.8" cy="204.3" rx="2.6" ry="2.1" transform="rotate(-45 849.8 204.3)" fill="#0f8a3e"/><circle cx="862.8" cy="202.6" r="1.5" fill="#8a8a8a"/><circle cx="864.2" cy="204.8" r="1.3" fill="#111"/><line x1="857" y1="209.2" x2="861" y2="205" stroke="#0e7e34" stroke-width="2.4" stroke-linecap="round"/><ellipse cx="861.8" cy="204.3" rx="2.6" ry="2.1" transform="rotate(-45 861.8 204.3)" fill="#0f8a3e"/><circle cx="874.8" cy="202.6" r="1.5" fill="#8a8a8a"/><circle cx="876.2" cy="204.8" r="1.3" fill="#111"/><line x1="869" y1="209.2" x2="873" y2="205" stroke="#0e7e34" stroke-width="2.4" stroke-linecap="round"/><ellipse cx="873.8" cy="204.3" rx="2.6" ry="2.1" transform="rotate(-45 873.8 204.3)" fill="#0f8a3e"/><circle cx="886.8" cy="202.6" r="1.5" fill="#8a8a8a"/><circle cx="888.2" cy="204.8" r="1.3" fill="#111"/><line x1="881" y1="209.2" x2="885" y2="205" stroke="#0e7e34" stroke-width="2.4" stroke-linecap="round"/><ellipse cx="885.8" cy="204.3" rx="2.6" ry="2.1" transform="rotate(-45 885.8 204.3)" fill="#0f8a3e"/></g></svg>
<div class=t style="left:840.00px;top:213px;font-size:8.5px;line-height:10px;color:#555555;font-weight:normal;transform:scaleX(0.928);transform-origin:0 0;">Температура [ºC]</div>
<div style="position:absolute;left:840px;top:223px;width:118px;height:1px;background:#b4b4b4"></div>
<div style="position:absolute;left:840px;top:224px;width:118px;height:1px;background:#dedede"></div>
<svg width="960" height="540"><circle cx="955.2" cy="218.00" r="3.6" fill="#9a9a9a"/><circle cx="955.2" cy="218.00" r="2.4" fill="#c4c4c4"/><path d="M953.9 219.40 L955.2 216.40 L956.5 219.40Z" fill="#444"/></svg>
<div class=t style="left:843.00px;top:225px;font-size:10px;line-height:11px;color:#6a1e1e;font-weight:bold;transform:scaleX(1.171);transform-origin:0 0;">Газ</div>
<div class=t style="left:932.10px;top:225px;font-size:10px;line-height:11px;color:#161c7c;font-weight:bold;transform:scaleX(0.995);transform-origin:0 0;">68</div>
<div style="position:absolute;left:947px;top:227px;width:8px;height:8px;background:linear-gradient(135deg,#d4d4d4,#f2f2f2);border:1px solid #bcbcbc;box-sizing:border-box"></div>
<svg width="960" height="540"><path d="M949.2 231.2 L950.5 233 L953 228.8" stroke="#2a3a8a" stroke-width="0.9" fill="none"/></svg>
<div class=t style="left:843.00px;top:237px;font-size:10px;line-height:11px;color:#ea8246;font-weight:bold;transform:scaleX(1.125);transform-origin:0 0;">Ред.</div>
<div class=t style="left:932.10px;top:237px;font-size:10px;line-height:11px;color:#161c7c;font-weight:bold;transform:scaleX(0.995);transform-origin:0 0;">94</div>
<div style="position:absolute;left:947px;top:239px;width:8px;height:8px;background:linear-gradient(135deg,#d4d4d4,#f2f2f2);border:1px solid #bcbcbc;box-sizing:border-box"></div>
<svg width="960" height="540"><path d="M949.2 243.2 L950.5 245 L953 240.8" stroke="#2a3a8a" stroke-width="0.9" fill="none"/></svg>
<div class=t style="left:843.00px;top:249px;font-size:10px;line-height:11px;color:#f28686;font-weight:bold;transform:scaleX(1.097);transform-origin:0 0;">Внутренняя</div>
<div class=t style="left:932.10px;top:249px;font-size:10px;line-height:11px;color:#161c7c;font-weight:bold;transform:scaleX(0.995);transform-origin:0 0;">70</div>
<div style="position:absolute;left:947px;top:251px;width:8px;height:8px;background:linear-gradient(135deg,#d4d4d4,#f2f2f2);border:1px solid #bcbcbc;box-sizing:border-box"></div>
<svg width="960" height="540"><path d="M949.2 255.2 L950.5 257 L953 252.8" stroke="#2a3a8a" stroke-width="0.9" fill="none"/></svg>
<div class=t style="left:843.00px;top:261px;font-size:10px;line-height:11px;color:#6c1a8e;font-weight:bold;transform:scaleX(1.107);transform-origin:0 0;">Эмул. двиг-ля</div>
<div class=t style="left:932.10px;top:261px;font-size:10px;line-height:11px;color:#161c7c;font-weight:bold;transform:scaleX(0.995);transform-origin:0 0;">90</div>
<div style="position:absolute;left:947px;top:263px;width:8px;height:8px;background:linear-gradient(135deg,#d4d4d4,#f2f2f2);border:1px solid #bcbcbc;box-sizing:border-box"></div>
<svg width="960" height="540"><path d="M949.2 267.2 L950.5 269 L953 264.8" stroke="#2a3a8a" stroke-width="0.9" fill="none"/></svg>
<div class=t style="left:840.00px;top:276px;font-size:8.5px;line-height:10px;color:#555555;font-weight:normal;transform:scaleX(0.983);transform-origin:0 0;">Другие [V / mA / %]</div>
<div style="position:absolute;left:840px;top:287px;width:118px;height:1px;background:#b4b4b4"></div>
<div style="position:absolute;left:840px;top:288px;width:118px;height:1px;background:#dedede"></div>
<svg width="960" height="540"><circle cx="955.2" cy="281.50" r="3.6" fill="#9a9a9a"/><circle cx="955.2" cy="281.50" r="2.4" fill="#c4c4c4"/><path d="M953.9 282.90 L955.2 279.90 L956.5 282.90Z" fill="#444"/></svg>
<div class=t style="left:842.70px;top:289px;font-size:10px;line-height:11px;color:#e030e0;font-weight:bold;transform:scaleX(1.119);transform-origin:0 0;">Лямбда 1</div>
<div class=t style="left:918.30px;top:289px;font-size:10px;line-height:11px;color:#161c7c;font-weight:bold;transform:scaleX(1.030);transform-origin:0 0;">0.52</div>
<div style="position:absolute;left:947px;top:291px;width:8px;height:8px;background:linear-gradient(135deg,#d4d4d4,#f2f2f2);border:1px solid #bcbcbc;box-sizing:border-box"></div>
<svg width="960" height="540"><path d="M949.2 295.2 L950.5 297 L953 292.8" stroke="#2a3a8a" stroke-width="0.9" fill="none"/></svg>
<div class=t style="left:842.70px;top:301px;font-size:10px;line-height:11px;color:#8c8a22;font-weight:bold;transform:scaleX(1.120);transform-origin:0 0;">Питание</div>
<div class=t style="left:913.30px;top:301px;font-size:10px;line-height:11px;color:#161c7c;font-weight:bold;">13.49</div>
<div style="position:absolute;left:947px;top:303px;width:8px;height:8px;background:linear-gradient(135deg,#d4d4d4,#f2f2f2);border:1px solid #bcbcbc;box-sizing:border-box"></div>
<svg width="960" height="540"><path d="M949.2 307.2 L950.5 309 L953 304.8" stroke="#2a3a8a" stroke-width="0.9" fill="none"/></svg>
<div class=t style="left:842.70px;top:313px;font-size:10px;line-height:11px;color:#2e8a8a;font-weight:bold;transform:scaleX(1.093);transform-origin:0 0;">Напря. AUX</div>
<div class=t style="left:918.30px;top:313px;font-size:10px;line-height:11px;color:#161c7c;font-weight:bold;transform:scaleX(1.030);transform-origin:0 0;">0.00</div>
<div style="position:absolute;left:947px;top:315px;width:8px;height:8px;background:linear-gradient(135deg,#d4d4d4,#f2f2f2);border:1px solid #bcbcbc;box-sizing:border-box"></div>
<svg width="960" height="540"><path d="M949.2 319.2 L950.5 321 L953 316.8" stroke="#2a3a8a" stroke-width="0.9" fill="none"/></svg>
<div class=t style="left:840.00px;top:327px;font-size:8.5px;line-height:10px;color:#555555;font-weight:normal;transform:scaleX(0.929);transform-origin:0 0;">Обороты [об./мин.]</div>
<div style="position:absolute;left:840px;top:337px;width:118px;height:1px;background:#b4b4b4"></div>
<div style="position:absolute;left:840px;top:338px;width:118px;height:1px;background:#dedede"></div>
<svg width="960" height="540"><circle cx="955.2" cy="332.50" r="3.6" fill="#9a9a9a"/><circle cx="955.2" cy="332.50" r="2.4" fill="#c4c4c4"/><path d="M953.9 333.90 L955.2 330.90 L956.5 333.90Z" fill="#444"/></svg>
<div class=t style="left:842.70px;top:339px;font-size:12px;line-height:14px;color:#e01414;font-weight:bold;transform:scaleX(0.898);transform-origin:0 0;">Обороты</div>
<div class=t style="left:925.70px;top:339px;font-size:12px;line-height:14px;color:#161c7c;font-weight:bold;transform:scaleX(0.860);transform-origin:0 0;">882</div>
<div style="position:absolute;left:947px;top:342px;width:8px;height:8px;background:linear-gradient(135deg,#d4d4d4,#f2f2f2);border:1px solid #bcbcbc;box-sizing:border-box"></div>
<svg width="960" height="540"><path d="M949.2 346.2 L950.5 348 L953 343.8" stroke="#2a3a8a" stroke-width="0.9" fill="none"/></svg>
<div class=t style="left:840.00px;top:354px;font-size:8.5px;line-height:10px;color:#555555;font-weight:normal;transform:scaleX(0.951);transform-origin:0 0;">Нагрузка двигателя [%]</div>
<div style="position:absolute;left:840px;top:365px;width:118px;height:1px;background:#b4b4b4"></div>
<div style="position:absolute;left:840px;top:366px;width:118px;height:1px;background:#dedede"></div>
<svg width="960" height="540"><circle cx="955.2" cy="359.50" r="3.6" fill="#9a9a9a"/><circle cx="955.2" cy="359.50" r="2.4" fill="#c4c4c4"/><path d="M953.9 360.90 L955.2 357.90 L956.5 360.90Z" fill="#444"/></svg>
<div style="position:absolute;left:854px;top:366px;width:78px;height:12px;background:#000"></div>
<div style="position:absolute;left:855px;top:367px;width:2px;height:10px;background:#5ab02a"></div>
<div class=t style="left:887.55px;top:368px;font-size:9px;line-height:10px;color:#e8e84a;font-weight:bold;transform:scaleX(0.807);transform-origin:0 0;">2%</div>
<div style="position:absolute;left:947px;top:368px;width:8px;height:8px;background:linear-gradient(135deg,#d4d4d4,#f2f2f2);border:1px solid #bcbcbc;box-sizing:border-box"></div>
<svg width="960" height="540"><path d="M949.2 372.2 L950.5 374 L953 369.8" stroke="#2a3a8a" stroke-width="0.9" fill="none"/></svg>
<div style="position:absolute;left:1px;top:431px;width:837px;height:9px;background:#f5f5f5;border:1px solid #b4b4b4;box-sizing:border-box"></div>
<div class=t style="left:5.00px;top:431px;font-size:8px;line-height:9px;color:#333333;font-weight:normal;transform:scaleX(0.881);transform-origin:0 0;">Осциллограф</div>
<svg width="960" height="540"><path d="M830 433.5 L835 438 M835 433.5 L830 438" stroke="#111" stroke-width="1.5"/></svg>
<div style="position:absolute;left:1px;top:440px;width:837px;height:64px;background:#ffffff"></div>
<div style="position:absolute;left:837px;top:440px;width:1px;height:64px;background:#a8a8a8"></div>
<div style="position:absolute;left:1px;top:503px;width:837px;height:1px;background:#a8a8a8"></div>
<svg width="960" height="540"><rect x="16.3" y="452.6" width="809.4000000000001" height="1.5" fill="#3f6a22" opacity="1"/><rect x="16.3" y="454.1" width="809.4000000000001" height="1.0" fill="#8a7040" opacity="1"/><rect x="16.3" y="455.1" width="809.4000000000001" height="2.6" fill="#f6f0f2" opacity="1"/><rect x="16.3" y="457.9" width="809.4000000000001" height="1.4" fill="#e4a6a6" opacity="1"/><rect x="16.3" y="459.3" width="809.4000000000001" height="2.4" fill="#fbf6f6" opacity="1"/><rect x="16.3" y="461.7" width="809.4000000000001" height="1.2" fill="#e8b0b8" opacity="1"/><rect x="16.3" y="462.9" width="809.4000000000001" height="2.4" fill="#f8f2f4" opacity="1"/><rect x="16.3" y="465.3" width="809.4000000000001" height="1.9" fill="#ece6c0" opacity="1"/><rect x="16.3" y="467.2" width="809.4000000000001" height="1.0" fill="#f2ecd8" opacity="1"/><rect x="16.3" y="468.1" width="809.4000000000001" height="1.2" fill="#d0b0dc" opacity="1"/><rect x="16.3" y="469.3" width="809.4000000000001" height="0.8" fill="#e8e0f0" opacity="1"/><rect x="16.3" y="470.0" width="809.4000000000001" height="1.1" fill="#2a5a4a" opacity="1"/><rect x="16.3" y="468.1" width="80.7" height="1.2" fill="#c02050"/><rect x="225" y="468.1" width="105" height="1.2" fill="#c02050"/><rect x="345" y="468.1" width="135" height="1.2" fill="#c02050"/><rect x="620" y="468.1" width="80" height="1.2" fill="#c02050"/><rect x="760" y="468.1" width="65.70000000000005" height="1.2" fill="#c02050"/><line x1="16.3" y1="456.5" x2="825.7" y2="456.5" stroke="#c4c4c4" stroke-width="0.7" stroke-dasharray="2,3"/><line x1="16.3" y1="463.8" x2="825.7" y2="463.8" stroke="#c4c4c4" stroke-width="0.7" stroke-dasharray="2,3"/><rect x="274.5" y="466.7" width="4.4" height="1.5" fill="#8a4a28" opacity="0.75"/><rect x="535.4" y="466.7" width="3.7" height="1.5" fill="#8a4a28" opacity="0.75"/><rect x="443.6" y="466.7" width="6.3" height="1.5" fill="#8a4a28" opacity="0.75"/><rect x="62.5" y="466.7" width="7.6" height="1.5" fill="#8a4a28" opacity="0.75"/><rect x="46.2" y="466.7" width="6.9" height="1.5" fill="#8a4a28" opacity="0.75"/><rect x="72.0" y="466.7" width="3.8" height="1.5" fill="#8a4a28" opacity="0.75"/><rect x="354.8" y="466.7" width="10.4" height="1.5" fill="#8a4a28" opacity="0.75"/><rect x="115.0" y="466.7" width="5.0" height="1.5" fill="#8a4a28" opacity="0.75"/><rect x="516.6" y="466.7" width="11.5" height="1.5" fill="#8a4a28" opacity="0.75"/><rect x="476.5" y="466.7" width="6.6" height="1.5" fill="#8a4a28" opacity="0.75"/><rect x="794.8" y="466.7" width="3.4" height="1.5" fill="#8a4a28" opacity="0.75"/><rect x="700.8" y="466.7" width="5.6" height="1.5" fill="#8a4a28" opacity="0.75"/><rect x="131.3" y="466.7" width="4.1" height="1.5" fill="#8a4a28" opacity="0.75"/><rect x="262.3" y="466.7" width="10.3" height="1.5" fill="#8a4a28" opacity="0.75"/><rect x="160.4" y="466.7" width="8.2" height="1.5" fill="#8a4a28" opacity="0.75"/><rect x="525.8" y="466.7" width="6.4" height="1.5" fill="#8a4a28" opacity="0.75"/><rect x="453.1" y="466.7" width="3.6" height="1.5" fill="#8a4a28" opacity="0.75"/><rect x="63.8" y="466.7" width="4.9" height="1.5" fill="#8a4a28" opacity="0.75"/><rect x="558.9" y="466.7" width="6.8" height="1.5" fill="#8a4a28" opacity="0.75"/><rect x="266.8" y="466.7" width="8.3" height="1.5" fill="#8a4a28" opacity="0.75"/><rect x="377.7" y="466.7" width="5.7" height="1.5" fill="#8a4a28" opacity="0.75"/><rect x="649.7" y="466.7" width="9.3" height="1.5" fill="#8a4a28" opacity="0.75"/><rect x="210.9" y="466.7" width="8.2" height="1.5" fill="#8a4a28" opacity="0.75"/><rect x="435.1" y="466.7" width="10.9" height="1.5" fill="#8a4a28" opacity="0.75"/><rect x="598.0" y="466.7" width="5.6" height="1.5" fill="#8a4a28" opacity="0.75"/><rect x="797.9" y="466.7" width="4.1" height="1.5" fill="#8a4a28" opacity="0.75"/><rect x="349.7" y="466.7" width="9.8" height="1.5" fill="#8a4a28" opacity="0.75"/><rect x="137.5" y="466.7" width="7.4" height="1.5" fill="#8a4a28" opacity="0.75"/><rect x="47.6" y="466.7" width="9.0" height="1.5" fill="#8a4a28" opacity="0.75"/><rect x="626.0" y="466.7" width="8.2" height="1.5" fill="#8a4a28" opacity="0.75"/><rect x="714.4" y="466.7" width="5.8" height="1.5" fill="#8a4a28" opacity="0.75"/><rect x="570.7" y="466.7" width="8.3" height="1.5" fill="#8a4a28" opacity="0.75"/><rect x="478.7" y="466.7" width="7.1" height="1.5" fill="#8a4a28" opacity="0.75"/><rect x="686.1" y="466.7" width="11.5" height="1.5" fill="#8a4a28" opacity="0.75"/><rect x="394.3" y="466.7" width="9.0" height="1.5" fill="#8a4a28" opacity="0.75"/><rect x="64.7" y="466.7" width="9.3" height="1.5" fill="#8a4a28" opacity="0.75"/><rect x="532.3" y="466.7" width="11.9" height="1.5" fill="#8a4a28" opacity="0.75"/><rect x="671.7" y="466.7" width="5.6" height="1.5" fill="#8a4a28" opacity="0.75"/><rect x="323.9" y="466.7" width="9.0" height="1.5" fill="#8a4a28" opacity="0.75"/><rect x="34.3" y="466.7" width="7.2" height="1.5" fill="#8a4a28" opacity="0.75"/><rect x="150.3" y="466.7" width="4.1" height="1.5" fill="#8a4a28" opacity="0.75"/><rect x="63.3" y="466.7" width="9.9" height="1.5" fill="#8a4a28" opacity="0.75"/><rect x="119.4" y="466.7" width="5.2" height="1.5" fill="#8a4a28" opacity="0.75"/><rect x="328.0" y="466.7" width="10.8" height="1.5" fill="#8a4a28" opacity="0.75"/><rect x="80.6" y="466.7" width="7.0" height="1.5" fill="#8a4a28" opacity="0.75"/><rect x="634.6" y="457.8" width="16.4" height="1.6" fill="#ffffff"/><rect x="741.9" y="457.8" width="16.1" height="1.6" fill="#ffffff"/><rect x="526.9" y="457.8" width="9.8" height="1.6" fill="#ffffff"/><rect x="558.9" y="457.8" width="16.4" height="1.6" fill="#ffffff"/><rect x="796.9" y="457.8" width="6.1" height="1.6" fill="#ffffff"/><rect x="486.3" y="457.8" width="7.2" height="1.6" fill="#ffffff"/><rect x="509.0" y="457.8" width="10.8" height="1.6" fill="#ffffff"/><rect x="650.4" y="457.8" width="7.7" height="1.6" fill="#ffffff"/><rect x="417.9" y="457.8" width="9.9" height="1.6" fill="#ffffff"/><rect x="563.0" y="457.8" width="11.9" height="1.6" fill="#ffffff"/><rect x="795.1" y="457.8" width="13.7" height="1.6" fill="#ffffff"/><rect x="621.2" y="457.8" width="12.6" height="1.6" fill="#ffffff"/><rect x="312" y="469.4" width="8" height="1.2" fill="#2aa040"/><rect x="468" y="469.4" width="8" height="1.2" fill="#2aa040"/><rect x="700" y="469.4" width="8" height="1.2" fill="#2aa040"/><rect x="16.3" y="452.8" width="0.8" height="18" fill="#888"/><rect x="825.1" y="452.8" width="0.8" height="18" fill="#888"/><line x1="16.30" y1="471" x2="16.30" y2="473" stroke="#777" stroke-width="0.7"/><line x1="36.54" y1="471" x2="36.54" y2="472" stroke="#777" stroke-width="0.7"/><line x1="56.77" y1="471" x2="56.77" y2="473" stroke="#777" stroke-width="0.7"/><line x1="77.01" y1="471" x2="77.01" y2="472" stroke="#777" stroke-width="0.7"/><line x1="97.24" y1="471" x2="97.24" y2="473" stroke="#777" stroke-width="0.7"/><line x1="117.48" y1="471" x2="117.48" y2="472" stroke="#777" stroke-width="0.7"/><line x1="137.71" y1="471" x2="137.71" y2="473" stroke="#777" stroke-width="0.7"/><line x1="157.95" y1="471" x2="157.95" y2="472" stroke="#777" stroke-width="0.7"/><line x1="178.18" y1="471" x2="178.18" y2="473" stroke="#777" stroke-width="0.7"/><line x1="198.42" y1="471" x2="198.42" y2="472" stroke="#777" stroke-width="0.7"/><line x1="218.65" y1="471" x2="218.65" y2="473" stroke="#777" stroke-width="0.7"/><line x1="238.89" y1="471" x2="238.89" y2="472" stroke="#777" stroke-width="0.7"/><line x1="259.12" y1="471" x2="259.12" y2="473" stroke="#777" stroke-width="0.7"/><line x1="279.36" y1="471" x2="279.36" y2="472" stroke="#777" stroke-width="0.7"/><line x1="299.59" y1="471" x2="299.59" y2="473" stroke="#777" stroke-width="0.7"/><line x1="319.83" y1="471" x2="319.83" y2="472" stroke="#777" stroke-width="0.7"/><line x1="340.06" y1="471" x2="340.06" y2="473" stroke="#777" stroke-width="0.7"/><line x1="360.30" y1="471" x2="360.30" y2="472" stroke="#777" stroke-width="0.7"/><line x1="380.53" y1="471" x2="380.53" y2="473" stroke="#777" stroke-width="0.7"/><line x1="400.77" y1="471" x2="400.77" y2="472" stroke="#777" stroke-width="0.7"/><line x1="421.00" y1="471" x2="421.00" y2="473" stroke="#777" stroke-width="0.7"/><line x1="441.24" y1="471" x2="441.24" y2="472" stroke="#777" stroke-width="0.7"/><line x1="461.47" y1="471" x2="461.47" y2="473" stroke="#777" stroke-width="0.7"/><line x1="481.71" y1="471" x2="481.71" y2="472" stroke="#777" stroke-width="0.7"/><line x1="501.94" y1="471" x2="501.94" y2="473" stroke="#777" stroke-width="0.7"/><line x1="522.18" y1="471" x2="522.18" y2="472" stroke="#777" stroke-width="0.7"/><line x1="542.41" y1="471" x2="542.41" y2="473" stroke="#777" stroke-width="0.7"/><line x1="562.64" y1="471" x2="562.64" y2="472" stroke="#777" stroke-width="0.7"/><line x1="582.88" y1="471" x2="582.88" y2="473" stroke="#777" stroke-width="0.7"/><line x1="603.12" y1="471" x2="603.12" y2="472" stroke="#777" stroke-width="0.7"/><line x1="623.35" y1="471" x2="623.35" y2="473" stroke="#777" stroke-width="0.7"/><line x1="643.59" y1="471" x2="643.59" y2="472" stroke="#777" stroke-width="0.7"/><line x1="663.82" y1="471" x2="663.82" y2="473" stroke="#777" stroke-width="0.7"/><line x1="684.06" y1="471" x2="684.06" y2="472" stroke="#777" stroke-width="0.7"/><line x1="704.29" y1="471" x2="704.29" y2="473" stroke="#777" stroke-width="0.7"/><line x1="724.53" y1="471" x2="724.53" y2="472" stroke="#777" stroke-width="0.7"/><line x1="744.76" y1="471" x2="744.76" y2="473" stroke="#777" stroke-width="0.7"/><line x1="765.00" y1="471" x2="765.00" y2="472" stroke="#777" stroke-width="0.7"/><line x1="785.23" y1="471" x2="785.23" y2="473" stroke="#777" stroke-width="0.7"/><line x1="805.47" y1="471" x2="805.47" y2="472" stroke="#777" stroke-width="0.7"/><line x1="825.70" y1="471" x2="825.70" y2="473" stroke="#777" stroke-width="0.7"/></svg>
<div class=t style="left:8.00px;top:452px;font-size:7.5px;line-height:9px;color:#555555;font-weight:normal;">4</div>
<div class=t style="left:8.00px;top:459px;font-size:7.5px;line-height:9px;color:#555555;font-weight:normal;">2</div>
<div class=t style="left:8.00px;top:465px;font-size:7.5px;line-height:9px;color:#555555;font-weight:normal;">0</div>
<div class=t style="left:14.30px;top:473px;font-size:7.5px;line-height:9px;color:#555555;font-weight:normal;">0</div>
<div class=t style="left:34.54px;top:473px;font-size:7.5px;line-height:9px;color:#555555;font-weight:normal;">5</div>
<div class=t style="left:52.68px;top:473px;font-size:7.5px;line-height:9px;color:#555555;font-weight:normal;">10</div>
<div class=t style="left:72.92px;top:473px;font-size:7.5px;line-height:9px;color:#555555;font-weight:normal;">15</div>
<div class=t style="left:93.15px;top:473px;font-size:7.5px;line-height:9px;color:#555555;font-weight:normal;">20</div>
<div class=t style="left:113.39px;top:473px;font-size:7.5px;line-height:9px;color:#555555;font-weight:normal;">25</div>
<div class=t style="left:133.62px;top:473px;font-size:7.5px;line-height:9px;color:#555555;font-weight:normal;">30</div>
<div class=t style="left:153.86px;top:473px;font-size:7.5px;line-height:9px;color:#555555;font-weight:normal;">35</div>
<div class=t style="left:174.09px;top:473px;font-size:7.5px;line-height:9px;color:#555555;font-weight:normal;">40</div>
<div class=t style="left:194.33px;top:473px;font-size:7.5px;line-height:9px;color:#555555;font-weight:normal;">45</div>
<div class=t style="left:214.56px;top:473px;font-size:7.5px;line-height:9px;color:#555555;font-weight:normal;">50</div>
<div class=t style="left:234.80px;top:473px;font-size:7.5px;line-height:9px;color:#555555;font-weight:normal;">55</div>
<div class=t style="left:255.03px;top:473px;font-size:7.5px;line-height:9px;color:#555555;font-weight:normal;">60</div>
<div class=t style="left:275.27px;top:473px;font-size:7.5px;line-height:9px;color:#555555;font-weight:normal;">65</div>
<div class=t style="left:295.50px;top:473px;font-size:7.5px;line-height:9px;color:#555555;font-weight:normal;">70</div>
<div class=t style="left:315.74px;top:473px;font-size:7.5px;line-height:9px;color:#555555;font-weight:normal;">75</div>
<div class=t style="left:335.97px;top:473px;font-size:7.5px;line-height:9px;color:#555555;font-weight:normal;">80</div>
<div class=t style="left:356.21px;top:473px;font-size:7.5px;line-height:9px;color:#555555;font-weight:normal;">85</div>
<div class=t style="left:376.44px;top:473px;font-size:7.5px;line-height:9px;color:#555555;font-weight:normal;">90</div>
<div class=t style="left:396.68px;top:473px;font-size:7.5px;line-height:9px;color:#555555;font-weight:normal;">95</div>
<div class=t style="left:414.83px;top:473px;font-size:7.5px;line-height:9px;color:#555555;font-weight:normal;">100</div>
<div class=t style="left:435.06px;top:473px;font-size:7.5px;line-height:9px;color:#555555;font-weight:normal;">105</div>
<div class=t style="left:455.58px;top:473px;font-size:7.5px;line-height:9px;color:#555555;font-weight:normal;">110</div>
<div class=t style="left:475.81px;top:473px;font-size:7.5px;line-height:9px;color:#555555;font-weight:normal;">115</div>
<div class=t style="left:495.77px;top:473px;font-size:7.5px;line-height:9px;color:#555555;font-weight:normal;">120</div>
<div class=t style="left:516.00px;top:473px;font-size:7.5px;line-height:9px;color:#555555;font-weight:normal;">125</div>
<div class=t style="left:536.24px;top:473px;font-size:7.5px;line-height:9px;color:#555555;font-weight:normal;">130</div>
<div class=t style="left:556.47px;top:473px;font-size:7.5px;line-height:9px;color:#555555;font-weight:normal;">135</div>
<div class=t style="left:576.71px;top:473px;font-size:7.5px;line-height:9px;color:#555555;font-weight:normal;">140</div>
<div class=t style="left:596.94px;top:473px;font-size:7.5px;line-height:9px;color:#555555;font-weight:normal;">145</div>
<div class=t style="left:617.18px;top:473px;font-size:7.5px;line-height:9px;color:#555555;font-weight:normal;">150</div>
<div class=t style="left:637.41px;top:473px;font-size:7.5px;line-height:9px;color:#555555;font-weight:normal;">155</div>
<div class=t style="left:657.65px;top:473px;font-size:7.5px;line-height:9px;color:#555555;font-weight:normal;">160</div>
<div class=t style="left:677.88px;top:473px;font-size:7.5px;line-height:9px;color:#555555;font-weight:normal;">165</div>
<div class=t style="left:698.12px;top:473px;font-size:7.5px;line-height:9px;color:#555555;font-weight:normal;">170</div>
<div class=t style="left:718.35px;top:473px;font-size:7.5px;line-height:9px;color:#555555;font-weight:normal;">175</div>
<div class=t style="left:738.59px;top:473px;font-size:7.5px;line-height:9px;color:#555555;font-weight:normal;">180</div>
<div class=t style="left:758.82px;top:473px;font-size:7.5px;line-height:9px;color:#555555;font-weight:normal;">185</div>
<div class=t style="left:779.06px;top:473px;font-size:7.5px;line-height:9px;color:#555555;font-weight:normal;">190</div>
<div class=t style="left:799.29px;top:473px;font-size:7.5px;line-height:9px;color:#555555;font-weight:normal;">195</div>
<div class=t style="left:819.53px;top:473px;font-size:7.5px;line-height:9px;color:#555555;font-weight:normal;">200</div>
<div style="position:absolute;left:4px;top:487px;width:14px;height:14px;background:linear-gradient(#fbfbfb,#e2e2e2);border:1px solid #b8b8b8;border-radius:2px;box-sizing:border-box"></div>
<div style="position:absolute;left:22px;top:487px;width:14px;height:14px;background:linear-gradient(#fbfbfb,#e2e2e2);border:1px solid #b8b8b8;border-radius:2px;box-sizing:border-box"></div>
<div style="position:absolute;left:41px;top:487px;width:14px;height:14px;background:linear-gradient(#fbfbfb,#e2e2e2);border:1px solid #b8b8b8;border-radius:2px;box-sizing:border-box"></div>
<div style="position:absolute;left:58px;top:487px;width:14px;height:14px;background:linear-gradient(#fbfbfb,#e2e2e2);border:1px solid #b8b8b8;border-radius:2px;box-sizing:border-box"></div>
<div style="position:absolute;left:76px;top:487px;width:14px;height:14px;background:linear-gradient(#fbfbfb,#e2e2e2);border:1px solid #b8b8b8;border-radius:2px;box-sizing:border-box"></div>
<div style="position:absolute;left:94px;top:487px;width:14px;height:14px;background:linear-gradient(#fbfbfb,#e2e2e2);border:1px solid #b8b8b8;border-radius:2px;box-sizing:border-box"></div>
<div style="position:absolute;left:112px;top:487px;width:14px;height:14px;background:linear-gradient(#fbfbfb,#e2e2e2);border:1px solid #b8b8b8;border-radius:2px;box-sizing:border-box"></div>
<div style="position:absolute;left:131px;top:487px;width:14px;height:14px;background:linear-gradient(#fbfbfb,#e2e2e2);border:1px solid #b8b8b8;border-radius:2px;box-sizing:border-box"></div>
<div style="position:absolute;left:148px;top:487px;width:14px;height:14px;background:linear-gradient(#fbfbfb,#e2e2e2);border:1px solid #b8b8b8;border-radius:2px;box-sizing:border-box"></div>
<div style="position:absolute;left:167px;top:487px;width:14px;height:14px;background:linear-gradient(#fbfbfb,#e2e2e2);border:1px solid #b8b8b8;border-radius:2px;box-sizing:border-box"></div>
<svg width="960" height="540"><path d="M9 490.5 L13.5 494 L9 497.5Z" fill="#1e7a8a"/><rect x="26.5" y="491" width="5.5" height="5.5" fill="#111"/><circle cx="47.6" cy="494" r="3.2" fill="#e01010"/><path d="M61.5 490 h8 M61.5 492 L65.5 497.5 L69.5 492Z" stroke="#1a3a90" stroke-width="1.3" fill="#1a3a90"/><path d="M84.5 490.5 L81 494 L84.5 497.5Z" fill="#b8b8b8"/><path d="M99.5 490.5 L103 494 L99.5 497.5Z" fill="#b8b8b8"/><rect x="118.6" y="491.5" width="1.6" height="6" fill="#a8a8a8"/><rect x="118.6" y="489" width="1.6" height="1.4" fill="#a8a8a8"/><circle cx="136.5" cy="492.6" r="3" fill="none" stroke="#9a9a9a" stroke-width="1.1"/><line x1="138.5" y1="494.8" x2="141.0" y2="497.5" stroke="#9a9a9a" stroke-width="1.5"/><circle cx="154.5" cy="492.6" r="3" fill="none" stroke="#9a9a9a" stroke-width="1.1"/><line x1="156.5" y1="494.8" x2="159.0" y2="497.5" stroke="#9a9a9a" stroke-width="1.5"/><circle cx="172.5" cy="492.6" r="3" fill="none" stroke="#9a9a9a" stroke-width="1.1"/><line x1="174.5" y1="494.8" x2="177.0" y2="497.5" stroke="#9a9a9a" stroke-width="1.5"/></svg>
<div style="position:absolute;left:0px;top:504px;width:960px;height:2px;background:#dcdcdc"></div>
<div style="position:absolute;left:0px;top:505px;width:960px;height:11px;background:#f0f0f0"></div>
<div style="position:absolute;left:1px;top:506px;width:148px;height:9px;background:#007a00"></div>
<div class=t style="left:4.00px;top:507px;font-size:8px;line-height:9px;color:#ffffff;font-weight:normal;transform:scaleX(0.980);transform-origin:0 0;">Газ</div>
<div class=t style="left:152.90px;top:505px;font-size:8.5px;line-height:10px;color:#2a2a2a;font-weight:normal;transform:scaleX(0.782);transform-origin:0 0;">iQ-4  ver. 2.7.1  36.1.0  10.03.2016 8:41:49</div>
<div style="position:absolute;left:389px;top:505px;width:1px;height:11px;background:#e2e2e2"></div>
<div style="position:absolute;left:537px;top:505px;width:1px;height:11px;background:#e2e2e2"></div>
<div style="position:absolute;left:0px;top:516px;width:960px;height:24px;background:linear-gradient(90deg,#2a3546 0px,#263040 120px,#243040 300px,#1f2a38 430px,#222e3d 560px,#2e3c4d 640px,#28323f 665px,#3a4654 720px,#4a5562 760px,#3a4552 800px,#232d3a 830px,#26303c 900px,#252e3a 960px)"></div>
<div style="position:absolute;left:0px;top:516px;width:960px;height:1px;background:#55606c"></div>
<svg width="960" height="540"><defs><radialGradient id="orb" cx="0.5" cy="0.4" r="0.6"><stop offset="0" stop-color="#7fd8ff"/><stop offset="0.6" stop-color="#1a70b8"/><stop offset="1" stop-color="#0a3060"/></radialGradient></defs><path d="M664 516 L669 516 L689 540 L683 540Z" fill="#a05050" opacity="0.85"/><path d="M843 516 L849 516 L839 540 L833 540Z" fill="#8a4444" opacity="0.5"/><circle cx="16.3" cy="528.3" r="11.2" fill="url(#orb)" stroke="#0e2a48" stroke-width="0.8"/><g transform="rotate(-8 16 528)"><rect x="10.8" y="522" width="4.6" height="4.6" fill="#f0602a"/><rect x="16.4" y="522.6" width="4.6" height="4.6" fill="#8cc838"/><rect x="10.8" y="527.6" width="4.6" height="4.6" fill="#3aa8f0"/><rect x="16.4" y="528.2" width="4.6" height="4.6" fill="#f8c828"/></g><rect x="34" y="519" width="1" height="1" fill="#5a6470"/><rect x="38" y="519" width="1" height="1" fill="#5a6470"/><rect x="34" y="521" width="1" height="1" fill="#5a6470"/><rect x="38" y="521" width="1" height="1" fill="#5a6470"/><rect x="34" y="523" width="1" height="1" fill="#5a6470"/><rect x="38" y="523" width="1" height="1" fill="#5a6470"/><rect x="34" y="525" width="1" height="1" fill="#5a6470"/><rect x="38" y="525" width="1" height="1" fill="#5a6470"/><rect x="34" y="527" width="1" height="1" fill="#5a6470"/><rect x="38" y="527" width="1" height="1" fill="#5a6470"/><rect x="34" y="529" width="1" height="1" fill="#5a6470"/><rect x="38" y="529" width="1" height="1" fill="#5a6470"/><rect x="34" y="531" width="1" height="1" fill="#5a6470"/><rect x="38" y="531" width="1" height="1" fill="#5a6470"/><rect x="34" y="533" width="1" height="1" fill="#5a6470"/><rect x="38" y="533" width="1" height="1" fill="#5a6470"/><rect x="34" y="535" width="1" height="1" fill="#5a6470"/><rect x="38" y="535" width="1" height="1" fill="#5a6470"/><rect x="34" y="537" width="1" height="1" fill="#5a6470"/><rect x="38" y="537" width="1" height="1" fill="#5a6470"/><rect x="53" y="520.5" width="19.5" height="16.5" rx="1.2" fill="#f0d88c" stroke="#c8a850" stroke-width="0.5"/><rect x="54" y="522" width="17.5" height="3" fill="#fbf0c8"/><circle cx="56.5" cy="521.5" r="0.9" fill="#30c030"/><circle cx="61.5" cy="522.3" r="0.9" fill="#e02020"/><circle cx="66.5" cy="523.2" r="0.9" fill="#2080e0"/><path d="M56 529.5 h13.5 v7.5 h-2.5 v-4 h-8.5 v4 h-2.5Z" fill="#90c8e8"/><defs><linearGradient id="opb" x1="0" y1="0" x2="1" y2="1"><stop offset="0" stop-color="#6e7884"/><stop offset="1" stop-color="#3c4550"/></linearGradient><radialGradient id="opo" cx="0.3" cy="0.3" r="0.9"><stop offset="0" stop-color="#ff4a4a"/><stop offset="1" stop-color="#b80010"/></radialGradient></defs><rect x="83" y="517" width="34.5" height="22" rx="2" fill="url(#opb)" stroke="#828c96" stroke-width="0.8"/><path fill-rule="evenodd" fill="url(#opo)" d="M100 518.7 a8.7 9.4 0 1 0 0.01 0Z M100 521.3 a4.2 6.9 0 1 0 0.01 0Z"/><defs><linearGradient id="kmpg" x1="0" y1="0" x2="0" y2="1"><stop offset="0" stop-color="#6ab8f0"/><stop offset="1" stop-color="#2a78c8"/></linearGradient><linearGradient id="acadg" x1="0" y1="0" x2="1" y2="1"><stop offset="0" stop-color="#c81a22"/><stop offset="0.6" stop-color="#e0484c"/><stop offset="1" stop-color="#f4b0b0"/></linearGradient></defs><rect x="129" y="519.5" width="16.5" height="12" rx="1" fill="url(#kmpg)" stroke="#0a1a30" stroke-width="0.8"/><path d="M133 520.5 a5 5.5 0 0 0 0 10" stroke="#0a1a30" stroke-width="1" fill="none"/><text x="136" y="527.5" font-family="Liberation Sans" font-size="3.5" font-weight="bold" fill="#fff">KMP</text><ellipse cx="137" cy="534" rx="5" ry="1.6" fill="#080808"/><rect x="164.5" y="518" width="19.5" height="19.5" fill="url(#acadg)"/><path d="M167.5 534 L174.5 521.5 L178.5 528 L175 528 L173 531.5 L180.5 531.5 L182 534Z" fill="#6a0c10"/><path d="M170.5 534 L174.5 526.5 L177.5 534Z" fill="#b81820"/><path d="M202.5 522 L211 518.5 L221 521.5 L221 531 L212 534 L202.5 531Z" fill="#c42228"/><path d="M211 518.5 L221 521.5 L212 524.5 L202.5 522Z" fill="#e4484c"/><text x="204" y="531" font-family="Liberation Sans" font-weight="bold" font-size="7.5" fill="#fff">S</text><text x="211.5" y="532" font-family="Liberation Sans" font-weight="bold" font-size="7.5" fill="#fff">W</text><text x="205.5" y="538.5" font-family="Liberation Sans" font-weight="bold" font-size="6" fill="#fff" stroke="#222" stroke-width="0.3">2016</text><rect x="242" y="519" width="13.5" height="18" rx="1" fill="#9ed0f4" stroke="#5a9ad0" stroke-width="0.6"/><rect x="243.5" y="520.5" width="10.5" height="4" fill="#e8f6fe" stroke="#6aa8d8" stroke-width="0.4"/><g fill="#6aa8d8"><rect x="243.5" y="526.0" width="2" height="1.8"/><rect x="246.3" y="526.0" width="2" height="1.8"/><rect x="249.1" y="526.0" width="2" height="1.8"/><rect x="251.9" y="526.0" width="2" height="1.8"/><rect x="243.5" y="528.6" width="2" height="1.8"/><rect x="246.3" y="528.6" width="2" height="1.8"/><rect x="249.1" y="528.6" width="2" height="1.8"/><rect x="251.9" y="528.6" width="2" height="1.8"/><rect x="243.5" y="531.2" width="2" height="1.8"/><rect x="246.3" y="531.2" width="2" height="1.8"/><rect x="249.1" y="531.2" width="2" height="1.8"/><rect x="251.9" y="531.2" width="2" height="1.8"/><rect x="243.5" y="533.8" width="2" height="1.8"/><rect x="246.3" y="533.8" width="2" height="1.8"/><rect x="249.1" y="533.8" width="2" height="1.8"/><rect x="251.9" y="533.8" width="2" height="1.8"/></g><rect x="251.9" y="533.8" width="2" height="1.8" fill="#f0a030"/><circle cx="286" cy="527.5" r="8.3" fill="#111"/><circle cx="286" cy="527.5" r="6.6" fill="#f0a020"/><path d="M282 531 L286 523.5 L290 531Z" fill="none" stroke="#111" stroke-width="1.6"/><path d="M316.5 532.5 L315.5 538 L320.5 535Z" fill="#7a5ac8"/><circle cx="323" cy="526.8" r="9.3" fill="#7a5ac8"/><path d="M317.8 533 L317.5 536.2 L320.5 534.2Z" fill="#fff"/><circle cx="323" cy="526.8" r="7.9" fill="#fff"/><circle cx="323" cy="526.8" r="6.3" fill="#7a5ac8"/><path d="M319.8 522.8 q-1 1.5 0.5 4 q1.8 3 4.5 4 q1.5 0.3 2.2 -0.8 l-1.6 -1.6 l-1.2 0.6 q-1.8 -1 -2.6 -2.8 l0.6 -1.2 l-1.6 -1.6Z" fill="#fff"/><defs><linearGradient id="gpb" x1="0" y1="0" x2="0" y2="1"><stop offset="0" stop-color="#c4ccd4"/><stop offset="0.5" stop-color="#9aa4ae"/><stop offset="1" stop-color="#7c8692"/></linearGradient></defs><rect x="343.5" y="517" width="34.5" height="22.5" rx="2" fill="url(#gpb)" stroke="#a8b0b8" stroke-width="0.8"/><path d="M350.5 518.5 h19.5 v12 l-9.75 6.5 l-9.75 -6.5Z" fill="#fff"/><path d="M352 520 h16.5 v10 l-8.25 5.3 l-8.25 -5.3Z" fill="#1a8ae0"/><path d="M355.5 522.5 h10 v3 h-6.5 v4.5 h4 v-1.8 h-2.2 v-2.2 h4.7 v6.8 h-10Z" fill="#fff"/><rect x="380.5" y="517" width="34" height="22.5" rx="2" fill="#4e5864" stroke="#6e7882" stroke-width="0.8"/><rect x="388" y="519" width="19.5" height="18" fill="#4a5a90"/><rect x="388" y="532" width="19.5" height="5" fill="#2a6a30"/><ellipse cx="398" cy="529" rx="7" ry="7.8" fill="#f2f2f2"/><circle cx="392.5" cy="522" r="2.6" fill="#111"/><circle cx="403.5" cy="522" r="2.6" fill="#111"/><ellipse cx="395.3" cy="527.5" rx="1.7" ry="2.2" fill="#151515"/><ellipse cx="400.8" cy="527.5" rx="1.7" ry="2.2" fill="#151515"/><ellipse cx="398" cy="532" rx="1.6" ry="1" fill="#222"/><rect x="807" y="519" width="1" height="1" fill="#5a6470"/><rect x="810" y="519" width="1" height="1" fill="#5a6470"/><rect x="807" y="521" width="1" height="1" fill="#5a6470"/><rect x="810" y="521" width="1" height="1" fill="#5a6470"/><rect x="807" y="523" width="1" height="1" fill="#5a6470"/><rect x="810" y="523" width="1" height="1" fill="#5a6470"/><rect x="807" y="525" width="1" height="1" fill="#5a6470"/><rect x="810" y="525" width="1" height="1" fill="#5a6470"/><rect x="807" y="527" width="1" height="1" fill="#5a6470"/><rect x="810" y="527" width="1" height="1" fill="#5a6470"/><rect x="807" y="529" width="1" height="1" fill="#5a6470"/><rect x="810" y="529" width="1" height="1" fill="#5a6470"/><rect x="807" y="531" width="1" height="1" fill="#5a6470"/><rect x="810" y="531" width="1" height="1" fill="#5a6470"/><rect x="807" y="533" width="1" height="1" fill="#5a6470"/><rect x="810" y="533" width="1" height="1" fill="#5a6470"/><rect x="807" y="535" width="1" height="1" fill="#5a6470"/><rect x="810" y="535" width="1" height="1" fill="#5a6470"/><rect x="807" y="537" width="1" height="1" fill="#5a6470"/><rect x="810" y="537" width="1" height="1" fill="#5a6470"/><path d="M836 530.5 L839 527 L842 530.5Z" fill="#f0f0f0"/><rect x="848.5" y="524" width="1.2" height="9" fill="#e8e8e8"/><path d="M849.7 524 h6.5 v5 h-6.5Z" fill="#ececec"/><circle cx="855.5" cy="531" r="2.7" fill="#e02a2a"/><path d="M854.2 529.7 L856.8 532.3 M856.8 529.7 L854.2 532.3" stroke="#fff" stroke-width="0.8"/><rect x="865.5" y="524.5" width="6" height="9" rx="1" fill="none" stroke="#e8e8e8" stroke-width="1"/><rect x="867.3" y="523.5" width="2.4" height="1" fill="#e8e8e8"/><rect x="867" y="529" width="3" height="3.5" fill="#e0e0e0"/><path d="M877.5 532 h3 M880.5 532 v-1.5 h2" stroke="#8a8a8a" stroke-width="1"/><path d="M882.5 528 L887.5 533 M887.5 528 L882.5 533" stroke="#d82020" stroke-width="1.5"/><path d="M892 526.5 h2.5 l3.5 -3 v11.5 l-3.5 -3 h-2.5Z" fill="#eeeeee"/><path d="M899.5 526 q1.8 3 0 6" stroke="#cccccc" stroke-width="0.9" fill="none"/><rect x="952.5" y="516" width="7.5" height="24" fill="#344050" stroke="#5a6672" stroke-width="0.6"/></svg>
<div class=t style="left:817.50px;top:523px;font-size:8px;line-height:9px;color:#f0f0f0;font-weight:bold;transform:scaleX(0.807);transform-origin:0 0;">RU</div>
<div class=t style="left:920.00px;top:519px;font-size:8px;line-height:9px;color:#f4f4f4;font-weight:normal;transform:scaleX(0.801);transform-origin:0 0;">12:11</div>
<div class=t style="left:911.70px;top:530px;font-size:8px;line-height:9px;color:#f4f4f4;font-weight:normal;transform:scaleX(0.813);transform-origin:0 0;">11.08.2018</div>
</body></html>
